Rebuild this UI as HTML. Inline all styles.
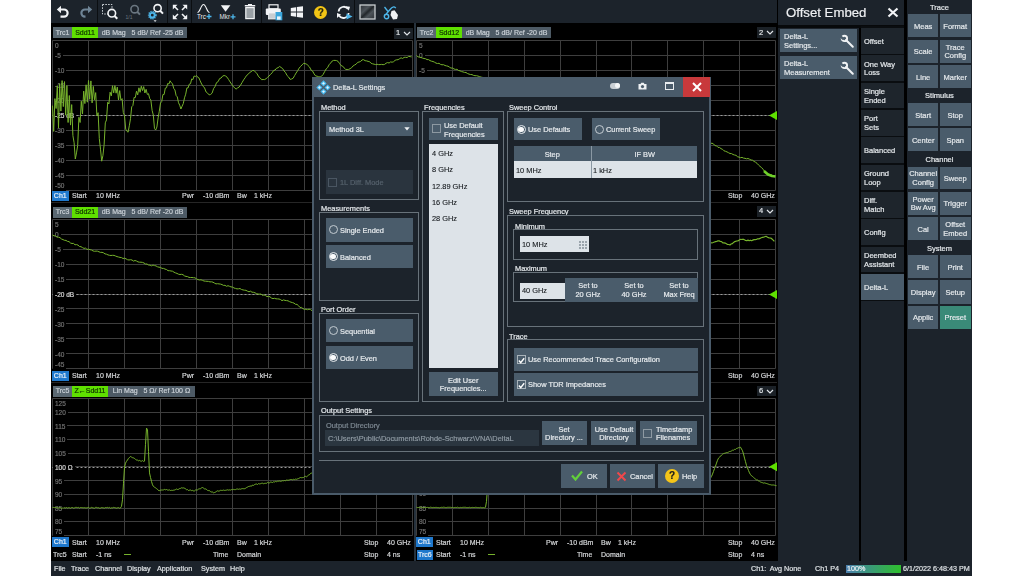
<!DOCTYPE html><html><head><meta charset="utf-8"><style>
html,body{margin:0;padding:0}
body{width:1024px;height:576px;background:#fff;position:relative;overflow:hidden;font-family:"Liberation Sans",sans-serif}
.a{position:absolute}
.t{white-space:nowrap;-webkit-text-stroke:0.2px currentColor;will-change:transform}
svg{position:absolute;left:0;top:0}
</style></head><body>
<div class="a" style="left:51px;top:0px;width:921px;height:576px;background:#000;"></div>
<div class="a" style="left:51px;top:0px;width:726px;height:23px;background:#1c232b;"></div>
<div class="a" style="left:97px;top:0px;width:1px;height:23px;background:#0b0e11;"></div>
<div class="a" style="left:167px;top:0px;width:1px;height:23px;background:#0b0e11;"></div>
<div class="a" style="left:191px;top:0px;width:1px;height:23px;background:#0b0e11;"></div>
<div class="a" style="left:261px;top:0px;width:1px;height:23px;background:#0b0e11;"></div>
<div class="a" style="left:354px;top:0px;width:1px;height:23px;background:#0b0e11;"></div>
<svg class="a" style="left:56px;top:5px" width="14" height="13" viewBox="0 0 14 13"><path d="M4,4.5 L8,4.5 A3.6,3.6 0 0 1 8,11.7 L4.5,11.7" fill="none" stroke="#f2f4f6" stroke-width="2.2"/><polygon points="0.8,4.5 5,0.8 5,8.2" fill="#f2f4f6"/></svg>
<svg class="a" style="left:79px;top:5px" width="14" height="13" viewBox="0 0 14 13"><path d="M10,4.5 L6,4.5 A3.6,3.6 0 0 0 6,11.7 L6.5,11.7" fill="none" stroke="#6f8597" stroke-width="2.2"/><polygon points="13.2,4.5 9,0.8 9,8.2" fill="#6f8597"/></svg>
<svg class="a" style="left:101px;top:3px" width="18" height="17" viewBox="0 0 18 17"><rect x="1.5" y="1.5" width="9.5" height="9.5" fill="none" stroke="#c8ced3" stroke-width="1" stroke-dasharray="1.6 1.2"/><circle cx="10.8" cy="10.2" r="3.8" fill="#1c232b" stroke="#f2f4f6" stroke-width="1.6"/><line x1="13.5" y1="13" x2="16.3" y2="15.8" stroke="#f2f4f6" stroke-width="2"/></svg>
<svg class="a" style="left:124px;top:3px" width="18" height="17" viewBox="0 0 18 17"><circle cx="10.6" cy="6.2" r="3.7" fill="none" stroke="#6a7680" stroke-width="1.6"/><line x1="13.2" y1="8.8" x2="16" y2="11.6" stroke="#6a7680" stroke-width="2"/><text x="1.5" y="15.5" font-size="5" fill="#6a7680" font-family="Liberation Sans">1/1</text></svg>
<svg class="a" style="left:147px;top:3px" width="19" height="20" viewBox="0 0 19 20"><circle cx="10.6" cy="5.2" r="3.6" fill="none" stroke="#f2f4f6" stroke-width="1.6"/><line x1="13.2" y1="7.8" x2="16" y2="10.6" stroke="#f2f4f6" stroke-width="2"/><circle cx="5.3" cy="12.2" r="3.6" fill="none" stroke="#4db6ea" stroke-width="1.6" stroke-dasharray="1.2 0.9"/><circle cx="5.3" cy="12.2" r="2.3" fill="none" stroke="#4db6ea" stroke-width="1.8"/><polygon points="6.6,17.2 9.6,17.2 8.1,19" fill="#e0e4e8"/></svg>
<svg class="a" style="left:172px;top:4px" width="16" height="16" viewBox="0 0 16 16"><g stroke="#f2f4f6" stroke-width="1.6" fill="none"><line x1="2" y1="2" x2="6" y2="6"/><line x1="14" y1="2" x2="10" y2="6"/><line x1="2" y1="14" x2="6" y2="10"/><line x1="14" y1="14" x2="10" y2="10"/></g><g fill="#f2f4f6"><polygon points="0.8,0.8 5.5,0.8 0.8,5.5"/><polygon points="15.2,0.8 10.5,0.8 15.2,5.5"/><polygon points="0.8,15.2 5.5,15.2 0.8,10.5"/><polygon points="15.2,15.2 10.5,15.2 15.2,10.5"/></g></svg>
<svg class="a" style="left:196px;top:3px" width="17" height="18" viewBox="0 0 17 18"><path d="M1.5,9.5 C4,9.5 5,1.5 7.5,1.5 C10,1.5 11,9.5 13.5,9.5" fill="none" stroke="#f2f4f6" stroke-width="1.1"/><text x="1" y="16" font-size="6.3" fill="#f2f4f6" font-family="Liberation Sans">Trc</text><path d="M10.5,13.5 L15.5,13.5 M13,11 L13,16" stroke="#4db6ea" stroke-width="1.3"/></svg>
<svg class="a" style="left:219px;top:3px" width="18" height="18" viewBox="0 0 18 18"><polygon points="1.8,2.2 11.4,2.2 6.6,8.8" fill="#f2f4f6"/><text x="0.5" y="16" font-size="6.3" fill="#e0e4e8" font-family="Liberation Sans">Mkr</text><path d="M11.5,13.8 L16.5,13.8 M14,11.3 L14,16.3" stroke="#4db6ea" stroke-width="1.3"/></svg>
<svg class="a" style="left:244px;top:4px" width="12" height="16" viewBox="0 0 12 16"><rect x="0.8" y="1" width="10.4" height="1.5" fill="#f2f4f6"/><rect x="4" y="0" width="4" height="1.2" fill="#f2f4f6"/><rect x="1.8" y="3.6" width="8.4" height="11" fill="#9aa1a6" stroke="#f2f4f6" stroke-width="1.2"/></svg>
<svg class="a" style="left:265px;top:4px" width="18" height="17" viewBox="0 0 18 17"><rect x="4" y="0.8" width="9" height="4" fill="none" stroke="#f2f4f6" stroke-width="1.2"/><rect x="0.8" y="4.6" width="15" height="6.5" rx="1" fill="#f2f4f6"/><rect x="3.5" y="9" width="7" height="6" fill="#c8ced2" stroke="#f2f4f6" stroke-width="0.8"/><rect x="10.5" y="8" width="6.8" height="8.3" fill="#3ba6db"/><rect x="12" y="12.4" width="3.6" height="3.3" fill="#e8f4fb"/></svg>
<svg class="a" style="left:290px;top:6px" width="14" height="12" viewBox="0 0 14 12"><polygon points="0.8,2 6,1.2 6,5.6 0.8,5.6" fill="#f2f4f6"/><polygon points="6.8,1.1 13,0.2 13,5.6 6.8,5.6" fill="#f2f4f6"/><polygon points="0.8,6.4 6,6.4 6,10.8 0.8,10" fill="#f2f4f6"/><polygon points="6.8,6.4 13,6.4 13,11.8 6.8,10.9" fill="#f2f4f6"/></svg>
<div class="a" style="left:313.5px;top:5.5px;width:13.5px;height:13.5px;border-radius:50%;background:#f3c515"></div>
<div class="a t" style="left:313.5px;top:5.5px;width:13.5px;height:13.5px;line-height:13.5px;text-align:center;font-size:10px;font-weight:bold;color:#2a2a10">?</div>
<svg class="a" style="left:336px;top:5px" width="17" height="15" viewBox="0 0 17 15"><path d="M2.6,6.5 A5.2,5.2 0 0 1 12,4" fill="none" stroke="#f2f4f6" stroke-width="1.8"/><polygon points="9.8,1.2 14,1.8 12.8,5.8" fill="#f2f4f6"/><path d="M12.6,8 A5.2,5.2 0 0 1 3,10.5" fill="none" stroke="#f2f4f6" stroke-width="1.8"/><polygon points="1,8 5,9.5 1,13" fill="#f2f4f6"/><polygon points="10.5,8.5 16.5,11.5 10.5,14.5" fill="#4db6ea"/></svg>
<svg class="a" style="left:359px;top:4px" width="17" height="16" viewBox="0 0 17 16"><defs><linearGradient id="sg" x1="0" y1="0" x2="1" y2="1"><stop offset="0" stop-color="#2c3136"/><stop offset="0.35" stop-color="#4d545a"/><stop offset="0.5" stop-color="#22272b"/><stop offset="0.65" stop-color="#4d545a"/><stop offset="1" stop-color="#2c3136"/></linearGradient></defs><rect x="1" y="1" width="15" height="14" fill="url(#sg)" stroke="#c9ced2" stroke-width="1.3"/></svg>
<svg class="a" style="left:383px;top:5px" width="16" height="15" viewBox="0 0 16 15"><path d="M3.2,9 L7.5,4 C9,2 11,1 12.8,3.2" fill="none" stroke="#4db6ea" stroke-width="1.3"/><circle cx="3.5" cy="11.5" r="2.2" fill="none" stroke="#4db6ea" stroke-width="1.4"/><path d="M1.5,2 L5,6.5" stroke="#4db6ea" stroke-width="1.3"/><path d="M8.5,6 L11.5,5.2 L15,10 L14,14 L10,14.5 L7.5,10 Z" fill="#f0f2f4"/></svg>
<div class="a" style="left:414px;top:23px;width:1.5px;height:538px;background:#26323d;"></div>
<svg width="1024" height="576" style="position:absolute;left:0;top:0"><line x1="52.5" y1="40.5" x2="52.5" y2="190.5" stroke="#3e3e3e" stroke-width="1" /><line x1="88.5" y1="40.5" x2="88.5" y2="190.5" stroke="#3e3e3e" stroke-width="1" /><line x1="124.5" y1="40.5" x2="124.5" y2="190.5" stroke="#3e3e3e" stroke-width="1" /><line x1="160.5" y1="40.5" x2="160.5" y2="190.5" stroke="#3e3e3e" stroke-width="1" /><line x1="196.5" y1="40.5" x2="196.5" y2="190.5" stroke="#3e3e3e" stroke-width="1" /><line x1="232.5" y1="40.5" x2="232.5" y2="190.5" stroke="#3e3e3e" stroke-width="1" /><line x1="268.5" y1="40.5" x2="268.5" y2="190.5" stroke="#3e3e3e" stroke-width="1" /><line x1="304.5" y1="40.5" x2="304.5" y2="190.5" stroke="#3e3e3e" stroke-width="1" /><line x1="340.5" y1="40.5" x2="340.5" y2="190.5" stroke="#3e3e3e" stroke-width="1" /><line x1="376.5" y1="40.5" x2="376.5" y2="190.5" stroke="#3e3e3e" stroke-width="1" /><line x1="412.5" y1="40.5" x2="412.5" y2="190.5" stroke="#3e3e3e" stroke-width="1" /><line x1="52.5" y1="40.5" x2="412.5" y2="40.5" stroke="#3e3e3e" stroke-width="1" /><line x1="52.5" y1="55.5" x2="412.5" y2="55.5" stroke="#3e3e3e" stroke-width="1" /><line x1="52.5" y1="70.5" x2="412.5" y2="70.5" stroke="#3e3e3e" stroke-width="1" /><line x1="52.5" y1="85.5" x2="412.5" y2="85.5" stroke="#3e3e3e" stroke-width="1" /><line x1="52.5" y1="100.5" x2="412.5" y2="100.5" stroke="#3e3e3e" stroke-width="1" /><line x1="52.5" y1="115.5" x2="412.5" y2="115.5" stroke="#3e3e3e" stroke-width="1" /><line x1="52.5" y1="130.5" x2="412.5" y2="130.5" stroke="#3e3e3e" stroke-width="1" /><line x1="52.5" y1="145.5" x2="412.5" y2="145.5" stroke="#3e3e3e" stroke-width="1" /><line x1="52.5" y1="160.5" x2="412.5" y2="160.5" stroke="#3e3e3e" stroke-width="1" /><line x1="52.5" y1="175.5" x2="412.5" y2="175.5" stroke="#3e3e3e" stroke-width="1" /><line x1="52.5" y1="190.5" x2="412.5" y2="190.5" stroke="#3e3e3e" stroke-width="1" /><line x1="52.5" y1="219.5" x2="52.5" y2="368.5" stroke="#3e3e3e" stroke-width="1" /><line x1="88.5" y1="219.5" x2="88.5" y2="368.5" stroke="#3e3e3e" stroke-width="1" /><line x1="124.5" y1="219.5" x2="124.5" y2="368.5" stroke="#3e3e3e" stroke-width="1" /><line x1="160.5" y1="219.5" x2="160.5" y2="368.5" stroke="#3e3e3e" stroke-width="1" /><line x1="196.5" y1="219.5" x2="196.5" y2="368.5" stroke="#3e3e3e" stroke-width="1" /><line x1="232.5" y1="219.5" x2="232.5" y2="368.5" stroke="#3e3e3e" stroke-width="1" /><line x1="268.5" y1="219.5" x2="268.5" y2="368.5" stroke="#3e3e3e" stroke-width="1" /><line x1="304.5" y1="219.5" x2="304.5" y2="368.5" stroke="#3e3e3e" stroke-width="1" /><line x1="340.5" y1="219.5" x2="340.5" y2="368.5" stroke="#3e3e3e" stroke-width="1" /><line x1="376.5" y1="219.5" x2="376.5" y2="368.5" stroke="#3e3e3e" stroke-width="1" /><line x1="412.5" y1="219.5" x2="412.5" y2="368.5" stroke="#3e3e3e" stroke-width="1" /><line x1="52.5" y1="219.5" x2="412.5" y2="219.5" stroke="#3e3e3e" stroke-width="1" /><line x1="52.5" y1="234.5" x2="412.5" y2="234.5" stroke="#3e3e3e" stroke-width="1" /><line x1="52.5" y1="249.5" x2="412.5" y2="249.5" stroke="#3e3e3e" stroke-width="1" /><line x1="52.5" y1="264.5" x2="412.5" y2="264.5" stroke="#3e3e3e" stroke-width="1" /><line x1="52.5" y1="279.5" x2="412.5" y2="279.5" stroke="#3e3e3e" stroke-width="1" /><line x1="52.5" y1="294.5" x2="412.5" y2="294.5" stroke="#3e3e3e" stroke-width="1" /><line x1="52.5" y1="308.5" x2="412.5" y2="308.5" stroke="#3e3e3e" stroke-width="1" /><line x1="52.5" y1="323.5" x2="412.5" y2="323.5" stroke="#3e3e3e" stroke-width="1" /><line x1="52.5" y1="338.5" x2="412.5" y2="338.5" stroke="#3e3e3e" stroke-width="1" /><line x1="52.5" y1="353.5" x2="412.5" y2="353.5" stroke="#3e3e3e" stroke-width="1" /><line x1="52.5" y1="368.5" x2="412.5" y2="368.5" stroke="#3e3e3e" stroke-width="1" /><line x1="52.5" y1="398.5" x2="52.5" y2="535.5" stroke="#3e3e3e" stroke-width="1" /><line x1="88.5" y1="398.5" x2="88.5" y2="535.5" stroke="#3e3e3e" stroke-width="1" /><line x1="124.5" y1="398.5" x2="124.5" y2="535.5" stroke="#3e3e3e" stroke-width="1" /><line x1="160.5" y1="398.5" x2="160.5" y2="535.5" stroke="#3e3e3e" stroke-width="1" /><line x1="196.5" y1="398.5" x2="196.5" y2="535.5" stroke="#3e3e3e" stroke-width="1" /><line x1="232.5" y1="398.5" x2="232.5" y2="535.5" stroke="#3e3e3e" stroke-width="1" /><line x1="268.5" y1="398.5" x2="268.5" y2="535.5" stroke="#3e3e3e" stroke-width="1" /><line x1="304.5" y1="398.5" x2="304.5" y2="535.5" stroke="#3e3e3e" stroke-width="1" /><line x1="340.5" y1="398.5" x2="340.5" y2="535.5" stroke="#3e3e3e" stroke-width="1" /><line x1="376.5" y1="398.5" x2="376.5" y2="535.5" stroke="#3e3e3e" stroke-width="1" /><line x1="412.5" y1="398.5" x2="412.5" y2="535.5" stroke="#3e3e3e" stroke-width="1" /><line x1="52.5" y1="398.5" x2="412.5" y2="398.5" stroke="#3e3e3e" stroke-width="1" /><line x1="52.5" y1="412.5" x2="412.5" y2="412.5" stroke="#3e3e3e" stroke-width="1" /><line x1="52.5" y1="425.5" x2="412.5" y2="425.5" stroke="#3e3e3e" stroke-width="1" /><line x1="52.5" y1="439.5" x2="412.5" y2="439.5" stroke="#3e3e3e" stroke-width="1" /><line x1="52.5" y1="453.5" x2="412.5" y2="453.5" stroke="#3e3e3e" stroke-width="1" /><line x1="52.5" y1="466.5" x2="412.5" y2="466.5" stroke="#3e3e3e" stroke-width="1" /><line x1="52.5" y1="480.5" x2="412.5" y2="480.5" stroke="#3e3e3e" stroke-width="1" /><line x1="52.5" y1="494.5" x2="412.5" y2="494.5" stroke="#3e3e3e" stroke-width="1" /><line x1="52.5" y1="508.5" x2="412.5" y2="508.5" stroke="#3e3e3e" stroke-width="1" /><line x1="52.5" y1="521.5" x2="412.5" y2="521.5" stroke="#3e3e3e" stroke-width="1" /><line x1="52.5" y1="535.5" x2="412.5" y2="535.5" stroke="#3e3e3e" stroke-width="1" /><line x1="416.5" y1="40.5" x2="416.5" y2="190.5" stroke="#3e3e3e" stroke-width="1" /><line x1="452.5" y1="40.5" x2="452.5" y2="190.5" stroke="#3e3e3e" stroke-width="1" /><line x1="488.5" y1="40.5" x2="488.5" y2="190.5" stroke="#3e3e3e" stroke-width="1" /><line x1="524.5" y1="40.5" x2="524.5" y2="190.5" stroke="#3e3e3e" stroke-width="1" /><line x1="560.5" y1="40.5" x2="560.5" y2="190.5" stroke="#3e3e3e" stroke-width="1" /><line x1="596.5" y1="40.5" x2="596.5" y2="190.5" stroke="#3e3e3e" stroke-width="1" /><line x1="631.5" y1="40.5" x2="631.5" y2="190.5" stroke="#3e3e3e" stroke-width="1" /><line x1="667.5" y1="40.5" x2="667.5" y2="190.5" stroke="#3e3e3e" stroke-width="1" /><line x1="703.5" y1="40.5" x2="703.5" y2="190.5" stroke="#3e3e3e" stroke-width="1" /><line x1="739.5" y1="40.5" x2="739.5" y2="190.5" stroke="#3e3e3e" stroke-width="1" /><line x1="775.5" y1="40.5" x2="775.5" y2="190.5" stroke="#3e3e3e" stroke-width="1" /><line x1="416.5" y1="40.5" x2="775.5" y2="40.5" stroke="#3e3e3e" stroke-width="1" /><line x1="416.5" y1="55.5" x2="775.5" y2="55.5" stroke="#3e3e3e" stroke-width="1" /><line x1="416.5" y1="70.5" x2="775.5" y2="70.5" stroke="#3e3e3e" stroke-width="1" /><line x1="416.5" y1="85.5" x2="775.5" y2="85.5" stroke="#3e3e3e" stroke-width="1" /><line x1="416.5" y1="100.5" x2="775.5" y2="100.5" stroke="#3e3e3e" stroke-width="1" /><line x1="416.5" y1="115.5" x2="775.5" y2="115.5" stroke="#3e3e3e" stroke-width="1" /><line x1="416.5" y1="130.5" x2="775.5" y2="130.5" stroke="#3e3e3e" stroke-width="1" /><line x1="416.5" y1="145.5" x2="775.5" y2="145.5" stroke="#3e3e3e" stroke-width="1" /><line x1="416.5" y1="160.5" x2="775.5" y2="160.5" stroke="#3e3e3e" stroke-width="1" /><line x1="416.5" y1="175.5" x2="775.5" y2="175.5" stroke="#3e3e3e" stroke-width="1" /><line x1="416.5" y1="190.5" x2="775.5" y2="190.5" stroke="#3e3e3e" stroke-width="1" /><line x1="416.5" y1="219.5" x2="416.5" y2="368.5" stroke="#3e3e3e" stroke-width="1" /><line x1="452.5" y1="219.5" x2="452.5" y2="368.5" stroke="#3e3e3e" stroke-width="1" /><line x1="488.5" y1="219.5" x2="488.5" y2="368.5" stroke="#3e3e3e" stroke-width="1" /><line x1="524.5" y1="219.5" x2="524.5" y2="368.5" stroke="#3e3e3e" stroke-width="1" /><line x1="560.5" y1="219.5" x2="560.5" y2="368.5" stroke="#3e3e3e" stroke-width="1" /><line x1="596.5" y1="219.5" x2="596.5" y2="368.5" stroke="#3e3e3e" stroke-width="1" /><line x1="631.5" y1="219.5" x2="631.5" y2="368.5" stroke="#3e3e3e" stroke-width="1" /><line x1="667.5" y1="219.5" x2="667.5" y2="368.5" stroke="#3e3e3e" stroke-width="1" /><line x1="703.5" y1="219.5" x2="703.5" y2="368.5" stroke="#3e3e3e" stroke-width="1" /><line x1="739.5" y1="219.5" x2="739.5" y2="368.5" stroke="#3e3e3e" stroke-width="1" /><line x1="775.5" y1="219.5" x2="775.5" y2="368.5" stroke="#3e3e3e" stroke-width="1" /><line x1="416.5" y1="219.5" x2="775.5" y2="219.5" stroke="#3e3e3e" stroke-width="1" /><line x1="416.5" y1="234.5" x2="775.5" y2="234.5" stroke="#3e3e3e" stroke-width="1" /><line x1="416.5" y1="249.5" x2="775.5" y2="249.5" stroke="#3e3e3e" stroke-width="1" /><line x1="416.5" y1="264.5" x2="775.5" y2="264.5" stroke="#3e3e3e" stroke-width="1" /><line x1="416.5" y1="279.5" x2="775.5" y2="279.5" stroke="#3e3e3e" stroke-width="1" /><line x1="416.5" y1="294.5" x2="775.5" y2="294.5" stroke="#3e3e3e" stroke-width="1" /><line x1="416.5" y1="308.5" x2="775.5" y2="308.5" stroke="#3e3e3e" stroke-width="1" /><line x1="416.5" y1="323.5" x2="775.5" y2="323.5" stroke="#3e3e3e" stroke-width="1" /><line x1="416.5" y1="338.5" x2="775.5" y2="338.5" stroke="#3e3e3e" stroke-width="1" /><line x1="416.5" y1="353.5" x2="775.5" y2="353.5" stroke="#3e3e3e" stroke-width="1" /><line x1="416.5" y1="368.5" x2="775.5" y2="368.5" stroke="#3e3e3e" stroke-width="1" /><line x1="416.5" y1="398.5" x2="416.5" y2="535.5" stroke="#3e3e3e" stroke-width="1" /><line x1="452.5" y1="398.5" x2="452.5" y2="535.5" stroke="#3e3e3e" stroke-width="1" /><line x1="488.5" y1="398.5" x2="488.5" y2="535.5" stroke="#3e3e3e" stroke-width="1" /><line x1="524.5" y1="398.5" x2="524.5" y2="535.5" stroke="#3e3e3e" stroke-width="1" /><line x1="560.5" y1="398.5" x2="560.5" y2="535.5" stroke="#3e3e3e" stroke-width="1" /><line x1="596.5" y1="398.5" x2="596.5" y2="535.5" stroke="#3e3e3e" stroke-width="1" /><line x1="631.5" y1="398.5" x2="631.5" y2="535.5" stroke="#3e3e3e" stroke-width="1" /><line x1="667.5" y1="398.5" x2="667.5" y2="535.5" stroke="#3e3e3e" stroke-width="1" /><line x1="703.5" y1="398.5" x2="703.5" y2="535.5" stroke="#3e3e3e" stroke-width="1" /><line x1="739.5" y1="398.5" x2="739.5" y2="535.5" stroke="#3e3e3e" stroke-width="1" /><line x1="775.5" y1="398.5" x2="775.5" y2="535.5" stroke="#3e3e3e" stroke-width="1" /><line x1="416.5" y1="398.5" x2="775.5" y2="398.5" stroke="#3e3e3e" stroke-width="1" /><line x1="416.5" y1="412.5" x2="775.5" y2="412.5" stroke="#3e3e3e" stroke-width="1" /><line x1="416.5" y1="425.5" x2="775.5" y2="425.5" stroke="#3e3e3e" stroke-width="1" /><line x1="416.5" y1="439.5" x2="775.5" y2="439.5" stroke="#3e3e3e" stroke-width="1" /><line x1="416.5" y1="453.5" x2="775.5" y2="453.5" stroke="#3e3e3e" stroke-width="1" /><line x1="416.5" y1="466.5" x2="775.5" y2="466.5" stroke="#3e3e3e" stroke-width="1" /><line x1="416.5" y1="480.5" x2="775.5" y2="480.5" stroke="#3e3e3e" stroke-width="1" /><line x1="416.5" y1="494.5" x2="775.5" y2="494.5" stroke="#3e3e3e" stroke-width="1" /><line x1="416.5" y1="508.5" x2="775.5" y2="508.5" stroke="#3e3e3e" stroke-width="1" /><line x1="416.5" y1="521.5" x2="775.5" y2="521.5" stroke="#3e3e3e" stroke-width="1" /><line x1="416.5" y1="535.5" x2="775.5" y2="535.5" stroke="#3e3e3e" stroke-width="1" /><line x1="51" y1="202.5" x2="777" y2="202.5" stroke="#262626" stroke-width="1" /><line x1="51" y1="382.5" x2="777" y2="382.5" stroke="#262626" stroke-width="1" /><line x1="52.5" y1="115.5" x2="412.5" y2="115.5" stroke="#9a9a9a" stroke-width="1" stroke-dasharray="2 2"/><line x1="416.5" y1="115.5" x2="775.5" y2="115.5" stroke="#9a9a9a" stroke-width="1" stroke-dasharray="2 2"/><line x1="52.5" y1="294.5" x2="412.5" y2="294.5" stroke="#9a9a9a" stroke-width="1" stroke-dasharray="2 2"/><line x1="416.5" y1="294.5" x2="775.5" y2="294.5" stroke="#9a9a9a" stroke-width="1" stroke-dasharray="2 2"/><line x1="52.5" y1="467.5" x2="412.5" y2="467.5" stroke="#9a9a9a" stroke-width="1" stroke-dasharray="2 2"/><line x1="416.5" y1="467.5" x2="775.5" y2="467.5" stroke="#9a9a9a" stroke-width="1" stroke-dasharray="2 2"/></svg>
<div class="a t" style="left:53px;top:41.2px;height:10px;line-height:10px;font-size:6.5px;color:#707070;background:#000;padding-right:2px;padding-left:2px">0</div>
<div class="a t" style="left:53px;top:51.2px;height:10px;line-height:10px;font-size:6.5px;color:#707070;background:#000;padding-right:2px;padding-left:2px">-5</div>
<div class="a t" style="left:53px;top:66.2px;height:10px;line-height:10px;font-size:6.5px;color:#707070;background:#000;padding-right:2px;padding-left:2px">-10</div>
<div class="a t" style="left:53px;top:81.2px;height:10px;line-height:10px;font-size:6.5px;color:#707070;background:#000;padding-right:2px;padding-left:2px">-15</div>
<div class="a t" style="left:53px;top:96.2px;height:10px;line-height:10px;font-size:6.5px;color:#707070;background:#000;padding-right:2px;padding-left:2px">-20</div>
<div class="a t" style="left:53px;top:111.2px;height:10px;line-height:10px;font-size:6.5px;color:#d8d8d8;background:#000;padding-right:2px;padding-left:2px">-25 dB</div>
<div class="a t" style="left:53px;top:126.2px;height:10px;line-height:10px;font-size:6.5px;color:#707070;background:#000;padding-right:2px;padding-left:2px">-30</div>
<div class="a t" style="left:53px;top:141.2px;height:10px;line-height:10px;font-size:6.5px;color:#707070;background:#000;padding-right:2px;padding-left:2px">-35</div>
<div class="a t" style="left:53px;top:156.2px;height:10px;line-height:10px;font-size:6.5px;color:#707070;background:#000;padding-right:2px;padding-left:2px">-40</div>
<div class="a t" style="left:53px;top:171.2px;height:10px;line-height:10px;font-size:6.5px;color:#707070;background:#000;padding-right:2px;padding-left:2px">-45</div>
<div class="a t" style="left:53px;top:181.2px;height:10px;line-height:10px;font-size:6.5px;color:#707070;background:#000;padding-right:2px;padding-left:2px">-50</div>
<div class="a t" style="left:417px;top:41.2px;height:10px;line-height:10px;font-size:6.5px;color:#707070;background:#000;padding-right:2px;padding-left:2px">5</div>
<div class="a t" style="left:417px;top:51.2px;height:10px;line-height:10px;font-size:6.5px;color:#707070;background:#000;padding-right:2px;padding-left:2px">0</div>
<div class="a t" style="left:417px;top:66.2px;height:10px;line-height:10px;font-size:6.5px;color:#707070;background:#000;padding-right:2px;padding-left:2px">-5</div>
<div class="a t" style="left:53px;top:219.7px;height:10px;line-height:10px;font-size:6.5px;color:#707070;background:#000;padding-right:2px;padding-left:2px">5</div>
<div class="a t" style="left:53px;top:230.2px;height:10px;line-height:10px;font-size:6.5px;color:#707070;background:#000;padding-right:2px;padding-left:2px">0</div>
<div class="a t" style="left:53px;top:245.2px;height:10px;line-height:10px;font-size:6.5px;color:#707070;background:#000;padding-right:2px;padding-left:2px">-5</div>
<div class="a t" style="left:53px;top:260.2px;height:10px;line-height:10px;font-size:6.5px;color:#707070;background:#000;padding-right:2px;padding-left:2px">-10</div>
<div class="a t" style="left:53px;top:275.2px;height:10px;line-height:10px;font-size:6.5px;color:#707070;background:#000;padding-right:2px;padding-left:2px">-15</div>
<div class="a t" style="left:53px;top:290.2px;height:10px;line-height:10px;font-size:6.5px;color:#d8d8d8;background:#000;padding-right:2px;padding-left:2px">-20 dB</div>
<div class="a t" style="left:53px;top:305.2px;height:10px;line-height:10px;font-size:6.5px;color:#707070;background:#000;padding-right:2px;padding-left:2px">-25</div>
<div class="a t" style="left:53px;top:320.2px;height:10px;line-height:10px;font-size:6.5px;color:#707070;background:#000;padding-right:2px;padding-left:2px">-30</div>
<div class="a t" style="left:53px;top:335.2px;height:10px;line-height:10px;font-size:6.5px;color:#707070;background:#000;padding-right:2px;padding-left:2px">-35</div>
<div class="a t" style="left:53px;top:349.7px;height:10px;line-height:10px;font-size:6.5px;color:#707070;background:#000;padding-right:2px;padding-left:2px">-40</div>
<div class="a t" style="left:53px;top:359.7px;height:10px;line-height:10px;font-size:6.5px;color:#707070;background:#000;padding-right:2px;padding-left:2px">-45</div>
<div class="a t" style="left:53px;top:399.2px;height:10px;line-height:10px;font-size:6.5px;color:#707070;background:#000;padding-right:2px;padding-left:2px">125</div>
<div class="a t" style="left:53px;top:407.7px;height:10px;line-height:10px;font-size:6.5px;color:#707070;background:#000;padding-right:2px;padding-left:2px">120</div>
<div class="a t" style="left:53px;top:421.7px;height:10px;line-height:10px;font-size:6.5px;color:#707070;background:#000;padding-right:2px;padding-left:2px">115</div>
<div class="a t" style="left:53px;top:435.2px;height:10px;line-height:10px;font-size:6.5px;color:#707070;background:#000;padding-right:2px;padding-left:2px">110</div>
<div class="a t" style="left:53px;top:448.7px;height:10px;line-height:10px;font-size:6.5px;color:#707070;background:#000;padding-right:2px;padding-left:2px">105</div>
<div class="a t" style="left:53px;top:463.2px;height:10px;line-height:10px;font-size:6.5px;color:#d8d8d8;background:#000;padding-right:2px;padding-left:2px">100 &Omega;</div>
<div class="a t" style="left:53px;top:476.7px;height:10px;line-height:10px;font-size:6.5px;color:#707070;background:#000;padding-right:2px;padding-left:2px">95</div>
<div class="a t" style="left:53px;top:490.2px;height:10px;line-height:10px;font-size:6.5px;color:#707070;background:#000;padding-right:2px;padding-left:2px">90</div>
<div class="a t" style="left:53px;top:503.7px;height:10px;line-height:10px;font-size:6.5px;color:#707070;background:#000;padding-right:2px;padding-left:2px">85</div>
<div class="a t" style="left:53px;top:517.2px;height:10px;line-height:10px;font-size:6.5px;color:#707070;background:#000;padding-right:2px;padding-left:2px">80</div>
<div class="a t" style="left:53px;top:526.7px;height:10px;line-height:10px;font-size:6.5px;color:#707070;background:#000;padding-right:2px;padding-left:2px">75</div>
<div class="a t" style="left:417px;top:489.2px;height:10px;line-height:10px;font-size:6.5px;color:#707070;background:#000;padding-right:2px;padding-left:2px">90</div>
<div class="a t" style="left:417px;top:503.7px;height:10px;line-height:10px;font-size:6.5px;color:#707070;background:#000;padding-right:2px;padding-left:2px">85</div>
<div class="a t" style="left:417px;top:517.2px;height:10px;line-height:10px;font-size:6.5px;color:#707070;background:#000;padding-right:2px;padding-left:2px">80</div>
<div class="a t" style="left:417px;top:526.7px;height:10px;line-height:10px;font-size:6.5px;color:#707070;background:#000;padding-right:2px;padding-left:2px">75</div>
<svg width="1024" height="576" style="position:absolute;left:0;top:0"><polyline points="52.5,105.6 53.7,131.4 54.9,98.6 56.1,108.5 57.3,85.7 58.5,128.0 59.7,83.7 60.9,111.1 62.1,80.6 63.3,106.6 64.5,81.6 65.7,115.2 66.9,85.6 68.1,122.5 69.3,95.5 70.5,125.1 71.7,104.6 72.9,135.6 74.1,142.7 75.3,159.0 76.5,152.9 77.7,145.3 78.9,117.3 80.1,122.5 81.3,101.2 82.5,114.0 83.7,91.1 84.9,103.6 86.1,84.8 87.3,102.2 88.5,80.5 89.7,99.3 90.9,80.9 92.1,102.9 93.3,86.4 94.5,99.8 95.7,92.6 96.9,115.8 98.1,112.7 99.3,138.6 100.5,149.2 101.7,161.2 102.9,155.7 104.1,144.9 105.3,122.8 106.5,119.9 107.7,102.3 108.9,104.0 110.1,92.2 111.3,95.9 112.5,85.7 113.7,92.9 114.9,85.6 116.1,93.2 117.3,87.1 118.5,100.0 119.7,90.6 120.9,100.1 122.1,98.6 123.3,112.6 124.5,115.6 125.7,129.1 126.9,131.2 128.1,132.2 129.3,125.8 130.5,118.7 131.7,106.8 132.9,105.5 134.1,97.4 135.3,97.6 136.5,91.2 137.7,94.9 138.9,87.8 140.1,92.3 141.3,86.2 142.5,90.6 143.7,86.6 144.9,93.0 146.1,89.3 147.3,94.4 148.5,93.7 149.7,98.5 150.9,100.3 152.1,110.4 153.3,115.0 154.5,128.6 155.7,130.0 156.9,127.0 158.1,117.9 159.3,111.2 160.5,103.0 161.7,101.6 162.9,94.6 164.1,94.5 165.3,88.1 166.5,87.8 167.7,83.5 168.9,84.0 170.1,80.8 171.3,82.8 172.5,83.7 173.7,88.4 174.9,89.9 176.1,95.5 177.3,96.9 178.5,102.7 179.7,105.2 180.9,109.0 182.1,106.2 183.3,103.5 184.5,97.8 185.7,94.2 186.9,87.9 188.1,87.9 189.3,84.1 190.5,83.8 191.7,78.9 192.9,79.6 194.1,76.0 195.3,76.5 196.5,75.5 197.7,77.3 198.9,77.8 200.1,80.7 201.6,84.0 203.1,86.2 204.6,88.0 206.1,92.0 207.6,93.1 209.1,94.9 210.6,94.5 212.1,93.1 213.6,88.6 215.1,86.4 216.6,82.5 218.1,81.7 219.6,78.6 221.1,78.0 222.6,76.1 224.1,75.5 225.6,76.0 227.1,77.2 228.6,79.5 230.1,81.9 231.6,84.2 233.1,86.2 234.6,87.9 236.1,89.1 237.6,87.9 239.1,87.1 240.6,85.0 242.1,82.5 243.6,79.9 245.1,77.8 246.6,75.4 248.1,74.4 249.6,72.5 251.1,71.7 252.6,70.5 254.1,70.6 255.6,72.2 257.1,73.8 258.6,76.7 260.1,77.8 261.6,79.7 263.1,79.5 264.6,79.6 266.1,78.7 267.6,77.3 269.1,76.0 270.6,74.3 272.1,72.8 273.6,70.5 275.1,70.0 276.6,68.2 278.1,67.7 279.6,66.4 281.1,67.5 282.6,68.5 284.1,71.0 285.6,72.7 287.1,75.6 288.6,77.0 290.1,79.4 291.6,79.0 293.1,78.3 294.6,75.6 296.1,73.0 297.6,70.8 299.1,68.2 300.6,66.4 302.1,64.9 303.6,63.3 305.1,63.7 306.6,64.0 308.1,65.7 309.6,67.1 311.1,70.1 312.6,71.1 314.1,73.9 315.6,75.9 317.1,76.2 318.6,76.7 320.1,77.0 321.6,76.2 323.1,74.5 324.6,71.7 326.1,69.0 327.6,67.6 329.1,64.7 330.6,63.1 332.1,61.1 333.6,60.4 335.1,60.4 336.6,60.6 338.1,61.4 339.6,63.6 341.1,65.6 342.6,66.1 344.1,67.9 345.6,69.3 347.1,69.5 348.6,69.4 350.1,68.7 351.6,67.7 353.1,65.9 354.6,65.0 356.1,64.2 357.6,62.4 359.1,62.0 360.6,61.5 362.1,59.9 363.6,59.7 365.1,60.7 366.6,60.9 368.1,61.4 369.6,61.7 371.1,63.3 372.6,63.8 374.1,64.2 375.6,64.6 377.1,64.3 378.6,64.6 380.1,64.6 381.6,64.4 383.1,64.7 384.6,64.4 386.1,63.2 387.6,62.6 389.1,63.0 390.6,61.9 392.1,62.2 393.6,61.7 395.1,60.3 396.6,59.8 398.1,59.7 399.6,58.7 401.1,57.8 402.6,58.5 404.1,57.4 405.6,57.3 407.1,57.5 408.6,56.4 410.1,56.6 411.6,56.9" fill="none" stroke="#76b22c" stroke-width="1" stroke-linejoin="round"/><polyline points="416.5,55.5 418.0,56.8 419.5,57.2 421.0,57.5 422.5,58.1 424.0,58.5 425.5,58.7 427.0,59.6 428.5,59.6 430.0,60.6 431.5,61.2 433.0,61.5 434.5,62.2 436.0,63.1 437.5,63.5 439.0,63.3 440.5,64.4 442.0,64.8 443.5,64.7 445.0,65.5 446.5,65.9 448.0,66.2 449.5,67.2 451.0,68.1 452.5,68.0 454.0,69.0 455.5,69.4 457.0,69.3 458.5,70.5 460.0,70.8 461.5,71.6 463.0,71.9 464.5,72.4 466.0,72.5 467.5,73.5 469.0,74.1 470.5,74.5 472.0,74.6 473.5,75.4 475.0,75.7 476.5,75.7 478.0,76.1 479.5,76.5 481.0,77.1 482.5,77.4 484.0,78.2 485.5,78.8 487.0,79.0 488.5,79.3 490.0,80.0 491.5,80.0 493.0,80.6 494.5,81.3 496.0,81.4 497.5,81.5 499.0,82.7 500.5,82.9 502.0,83.0 503.5,83.4 505.0,83.9 506.5,84.4 508.0,84.5 509.5,84.6 511.0,85.3 512.5,86.2 514.0,86.0 515.5,86.7 517.0,86.9 518.5,87.3 520.0,87.7 521.5,88.3 523.0,88.5 524.5,88.8 526.0,89.3 527.5,89.8 529.0,90.6 530.5,90.6 532.0,91.0 533.5,91.9 535.0,92.3 536.5,93.0 538.0,92.8 539.5,93.6 541.0,94.0 542.5,94.0 544.0,95.4 545.5,95.1 547.0,95.4 548.5,96.2 550.0,96.4 551.5,97.2 553.0,97.4 554.5,97.6 556.0,98.0 557.5,99.1 559.0,99.1 560.5,100.0 562.0,100.1 563.5,101.0 565.0,100.8 566.5,101.2 568.0,101.7 569.5,102.7 571.0,102.9 572.5,103.1 574.0,103.2 575.5,104.3 577.0,105.0 578.5,105.0 580.0,104.9 581.5,105.3 583.0,105.8 584.5,106.4 586.0,106.7 587.5,107.1 589.0,108.1 590.5,108.8 592.0,108.6 593.5,109.8 595.0,109.7 596.5,110.5 598.0,111.0 599.5,111.5 601.0,111.0 602.5,111.7 604.0,112.4 605.5,113.2 607.0,112.8 608.5,113.4 610.0,114.4 611.5,114.1 613.0,114.8 614.5,115.2 616.0,116.0 617.5,116.7 619.0,116.4 620.5,117.4 622.0,117.8 623.5,118.3 625.0,118.5 626.5,119.3 628.0,119.2 629.5,119.6 631.0,119.9 632.5,120.9 634.0,121.0 635.5,121.2 637.0,121.6 638.5,122.6 640.0,122.9 641.5,123.4 643.0,123.5 644.5,124.1 646.0,124.2 647.5,125.1 649.0,124.9 650.5,125.8 652.0,126.5 653.5,126.9 655.0,126.7 656.5,127.3 658.0,128.3 659.5,128.6 661.0,129.2 662.5,129.7 664.0,129.7 665.5,130.6 667.0,130.8 668.5,130.9 670.0,131.3 671.5,131.5 673.0,132.2 674.5,133.2 676.0,132.8 677.5,133.7 679.0,133.7 680.5,134.1 682.0,135.1 683.5,135.1 685.0,135.4 686.5,135.9 688.0,136.8 689.5,137.2 691.0,137.1 692.5,137.7 694.0,138.9 695.5,138.6 697.0,139.3 698.5,139.6 700.0,140.4 701.5,140.7 703.0,141.3 704.5,141.5 706.0,141.6 707.5,142.0 709.0,142.3 710.5,143.5 712.0,143.2 713.5,143.9 715.0,145.7 716.5,145.8 718.0,147.4 719.5,147.4 721.0,148.7 722.5,149.3 724.0,150.8 725.5,151.3 727.0,151.9 728.5,152.7 730.0,153.5 731.5,153.6 733.0,154.5 734.5,155.0 736.0,155.3 737.5,156.7 739.0,157.1 740.5,157.7 742.0,157.4 743.5,158.1 745.0,158.3 746.5,158.8 748.0,158.5 749.5,159.2 751.0,160.0 752.5,160.2 754.0,161.4 755.5,162.2 757.0,163.3 758.5,165.0 760.0,166.4 761.5,167.5 763.0,169.2 764.5,171.3 766.0,172.1 767.5,173.7 769.0,174.2 770.5,174.7 772.0,175.0 773.5,176.2 775.0,176.4" fill="none" stroke="#76b22c" stroke-width="1" stroke-linejoin="round"/><polyline points="764.0,171.0 768.0,174.5 772.0,176.0 775.5,176.5" fill="none" stroke="#6fd02a" stroke-width="2.6" stroke-linejoin="round"/><polyline points="52.5,235.0 54.0,235.8 55.5,236.0 57.0,237.1 58.5,237.2 60.0,237.7 61.5,239.0 63.0,239.6 64.5,240.3 66.0,240.4 67.5,241.4 69.0,241.6 70.5,243.0 72.0,243.5 73.5,243.4 75.0,244.8 76.5,244.6 78.0,245.1 79.5,246.5 81.0,246.7 82.5,247.6 84.0,248.4 85.5,248.1 87.0,249.4 88.5,249.2 90.0,249.7 91.5,250.0 93.0,250.9 94.5,251.3 96.0,251.1 97.5,251.2 99.0,251.8 100.5,252.4 102.0,252.3 103.5,252.8 105.0,253.9 106.5,254.2 108.0,254.9 109.5,255.3 111.0,255.5 112.5,255.3 114.0,255.4 115.5,256.0 117.0,256.6 118.5,257.0 120.0,257.4 121.5,257.6 123.0,258.5 124.5,258.2 126.0,258.8 127.5,259.7 129.0,260.0 130.5,259.7 132.0,260.0 133.5,261.1 135.0,260.5 136.5,261.0 138.0,261.9 139.5,262.2 141.0,262.2 142.5,262.4 144.0,263.0 145.5,264.0 147.0,264.0 148.5,265.0 150.0,265.1 151.5,265.8 153.0,265.0 154.5,265.6 156.0,265.9 157.5,266.8 159.0,267.2 160.5,267.4 162.0,268.4 163.5,268.4 165.0,269.1 166.5,269.5 168.0,270.7 169.5,270.7 171.0,271.0 172.5,271.2 174.0,272.2 175.5,272.9 177.0,273.4 178.5,274.2 180.0,274.5 181.5,274.3 183.0,274.7 184.5,275.9 186.0,276.4 187.5,276.6 189.0,277.4 190.5,277.5 192.0,277.5 193.5,277.7 195.0,277.8 196.5,278.9 198.0,279.6 199.5,280.0 201.0,279.8 202.5,280.4 204.0,281.0 205.5,281.2 207.0,281.3 208.5,281.4 210.0,281.9 211.5,281.8 213.0,282.2 214.5,283.1 216.0,283.9 217.5,283.7 219.0,283.9 220.5,284.1 222.0,284.6 223.5,285.4 225.0,285.3 226.5,286.3 228.0,285.7 229.5,286.3 231.0,286.9 232.5,287.1 234.0,288.0 235.5,288.4 237.0,288.9 238.5,288.8 240.0,288.5 241.5,289.5 243.0,289.9 244.5,290.2 246.0,290.3 247.5,291.2 249.0,291.8 250.5,291.2 252.0,292.2 253.5,292.3 255.0,292.8 256.5,293.6 258.0,294.1 259.5,294.1 261.0,294.0 262.5,295.4 264.0,294.9 265.5,295.6 267.0,296.6 268.5,296.4 270.0,296.8 271.5,298.1 273.0,298.6 274.5,298.3 276.0,298.8 277.5,298.9 279.0,299.0 280.5,299.5 282.0,300.7 283.5,299.9 285.0,300.4 286.5,300.6 288.0,300.8 289.5,301.6 291.0,302.2 292.5,302.6 294.0,303.1 295.5,304.3 297.0,304.4 298.5,305.7 300.0,307.5 301.5,307.4 303.0,308.7 304.5,309.3 306.0,309.2 307.5,309.7 309.0,309.2 310.5,309.6 312.0,310.7 313.5,309.8 315.0,311.0 316.5,310.5 318.0,311.7 319.5,311.7 321.0,311.9 322.5,311.6 324.0,311.8 325.5,313.0 327.0,312.6 328.5,312.9 330.0,313.9 331.5,314.3 333.0,313.6 334.5,315.0 336.0,314.8 337.5,314.9 339.0,314.9 340.5,315.5 342.0,316.5 343.5,316.0 345.0,316.1 346.5,316.4 348.0,316.7 349.5,317.3 351.0,318.3 352.5,317.6 354.0,318.0 355.5,319.2 357.0,319.6 358.5,319.8 360.0,319.3 361.5,319.7 363.0,320.7 364.5,320.5 366.0,321.0 367.5,320.8 369.0,320.8 370.5,321.5 372.0,322.3 373.5,322.6 375.0,322.7 376.5,322.8 378.0,323.2 379.5,323.4 381.0,323.8 382.5,324.5 384.0,324.0 385.5,324.8 387.0,325.5 388.5,325.7 390.0,325.2 391.5,326.4 393.0,326.6 394.5,326.1 396.0,326.5 397.5,326.7 399.0,326.9 400.5,328.3 402.0,327.9 403.5,328.7 405.0,328.1 406.5,328.3 408.0,329.6 409.5,329.9 411.0,330.4" fill="none" stroke="#76b22c" stroke-width="1" stroke-linejoin="round"/><polyline points="700.0,241.2 701.2,241.2 702.4,241.6 703.6,241.2 704.8,241.8 706.0,241.9 707.2,241.8 708.4,242.4 709.6,242.4 710.8,242.7 712.0,242.8 713.2,242.5 714.4,242.0 715.6,241.6 716.8,241.4 718.0,240.8 719.2,240.9 720.4,241.5 721.6,241.6 722.8,242.8 724.0,242.8 725.2,243.1 726.4,243.8 727.6,244.5 728.8,244.5 730.0,245.0 731.2,243.9 732.4,243.7 733.6,242.4 734.8,241.6 736.0,241.2 737.2,241.0 738.4,240.7 739.6,239.8 740.8,239.3 742.0,239.5 743.2,239.2 744.4,239.8 745.6,240.5 746.8,240.7 748.0,240.1 749.2,240.7 750.4,240.2 751.6,240.7 752.8,240.1 754.0,239.6 755.2,239.6 756.4,239.5 757.6,238.8 758.8,238.9 760.0,238.4 761.2,237.7 762.4,237.3 763.6,237.1 764.8,236.7 766.0,236.3 767.2,237.0 768.4,237.7 769.6,238.0 770.8,238.1 772.0,239.0 773.2,240.1 774.4,241.3" fill="none" stroke="#76b22c" stroke-width="1.2" stroke-linejoin="round"/><polyline points="52.5,507.5 53.5,507.4 54.5,507.6 55.5,507.6 56.5,507.4 57.5,507.8 58.5,508.2 59.5,507.8 60.5,508.0 61.5,508.1 62.5,508.1 63.5,508.2 64.5,507.7 65.5,508.0 66.5,507.5 67.5,508.1 68.5,507.7 69.5,507.8 70.5,508.2 71.5,507.6 72.5,507.5 73.5,508.1 74.5,507.9 75.5,507.4 76.5,507.4 77.5,507.7 78.5,507.4 79.5,508.1 80.5,507.5 81.5,507.6 82.5,507.7 83.5,507.8 84.5,507.7 85.5,507.9 86.5,507.9 87.5,507.7 88.5,507.4 89.5,508.2 90.5,508.0 91.5,507.4 92.5,507.7 93.5,508.0 94.5,508.2 95.5,507.4 96.5,507.4 97.5,507.8 98.5,507.7 99.5,508.2 100.5,508.1 101.5,507.6 102.5,507.7 103.5,507.9 104.5,508.1 105.5,507.5 106.5,507.7 107.5,507.4 108.5,507.9 109.5,507.4 110.5,508.2 111.5,507.8 112.5,507.9 113.5,507.4 114.5,507.6 115.5,507.8 116.5,508.1 117.5,507.8 118.5,507.6 119.5,508.2 120.5,507.9 121.5,506.3 122.5,499.7 123.5,483.2 124.5,467.1 125.5,463.2 126.5,461.3 127.5,460.0 128.5,458.4 129.5,457.4 130.5,456.5 131.5,457.1 132.5,457.7 133.5,457.9 134.5,458.4 135.5,459.4 136.5,460.0 137.5,460.1 138.5,460.8 139.5,460.4 140.5,461.0 141.5,461.2 142.5,460.6 143.5,461.4 144.5,461.1 145.5,444.3 146.5,428.1 147.5,429.6 148.5,451.5 149.5,472.9 150.5,477.4 151.5,481.4 152.5,484.8 153.5,486.5 154.5,487.2 155.5,487.8 156.5,488.6 157.5,489.3 158.5,490.5 159.5,490.6 160.5,490.2 161.5,490.0 162.5,490.0 163.5,489.9 164.5,489.4 165.5,489.8 166.5,489.5 167.5,490.0 168.5,490.1 169.5,489.9 170.5,490.5 171.5,490.3 172.5,490.4 173.5,490.2 174.5,490.0 175.5,489.6 176.5,489.0 177.5,489.5 178.5,489.3 179.5,488.6 180.5,488.4 181.5,487.8 182.5,488.0 183.5,487.9 184.5,488.0 185.5,489.0 186.5,489.7 187.5,489.6 188.5,490.5 189.5,490.2 190.5,490.0 191.5,490.6 192.5,490.4 193.5,490.9 194.5,490.9 195.5,490.0 196.5,490.0 197.5,489.9 198.5,489.1 199.5,488.8 200.5,488.7 201.5,487.9 202.5,487.5 203.5,488.1 204.5,488.9 205.5,488.9 206.5,489.4 207.5,490.4 208.5,490.6 209.5,490.7 210.5,491.6 211.5,492.0 212.5,492.0 213.5,492.8 214.5,492.5 215.5,492.1 216.5,491.4 217.5,490.8 218.5,491.1 219.5,490.9 220.5,490.3 221.5,490.4 222.5,490.4 223.5,490.1 224.5,490.4 225.5,490.3 226.5,490.1 227.5,489.8 228.5,490.1 229.5,489.9 230.5,490.1 231.5,489.6 232.5,489.7 233.5,489.4 234.5,489.6 235.5,489.6 236.5,489.1 237.5,489.0 238.5,489.3 239.5,489.0 240.5,489.2 241.5,488.8 242.5,488.6 243.5,488.7 244.5,488.7 245.5,488.3 246.5,487.6 247.5,487.1 248.5,486.5 249.5,486.3 250.5,486.0 251.5,486.2 252.5,485.0 253.5,485.4 254.5,484.6 255.5,484.2 256.5,484.0 257.5,484.5 258.5,483.6 259.5,483.9 260.5,483.7 261.5,483.3 262.5,483.2 263.5,483.7 264.5,483.4 265.5,483.3 266.5,483.3 267.5,482.4 268.5,482.9 269.5,482.8 270.5,482.1 271.5,482.2 272.5,482.5 273.5,481.8 274.5,482.0 275.5,481.4 276.5,481.7 277.5,481.2 278.5,481.2 279.5,481.0 280.5,481.3 281.5,481.1 282.5,480.7 283.5,480.8 284.5,480.5 285.5,480.7 286.5,480.1 287.5,480.2 288.5,480.2 289.5,479.9 290.5,479.5 291.5,479.5 292.5,479.8 293.5,479.3 294.5,479.6 295.5,479.1 296.5,479.3 297.5,478.9 298.5,478.6 299.5,478.0 300.5,477.5 301.5,477.7 302.5,477.6 303.5,477.5 304.5,476.6 305.5,476.3 306.5,476.8 307.5,476.0 308.5,475.1 309.5,474.7 310.5,473.4 311.5,473.1 312.5,473.1 313.5,472.9 314.5,472.4 315.5,472.3 316.5,472.6 317.5,472.7 318.5,471.9 319.5,471.7 320.5,471.7 321.5,472.2 322.5,471.8 323.5,471.7 324.5,472.1 325.5,471.6 326.5,471.2 327.5,471.5 328.5,470.8 329.5,470.9 330.5,471.2 331.5,470.6 332.5,470.4 333.5,470.7 334.5,470.4 335.5,470.9 336.5,470.0 337.5,470.5 338.5,470.1 339.5,470.3 340.5,469.9 341.5,469.9 342.5,469.5 343.5,469.3 344.5,469.3 345.5,469.5 346.5,469.0 347.5,468.7 348.5,468.7 349.5,468.3 350.5,468.4 351.5,468.5 352.5,468.3 353.5,468.2 354.5,467.8 355.5,467.4 356.5,467.3 357.5,467.4 358.5,467.2 359.5,467.4 360.5,466.9 361.5,467.2 362.5,467.0 363.5,466.9 364.5,466.8 365.5,466.5 366.5,466.3 367.5,466.0 368.5,465.6 369.5,466.2 370.5,465.8 371.5,465.3 372.5,465.9 373.5,465.4 374.5,465.3 375.5,465.0 376.5,464.6 377.5,465.2 378.5,464.4 379.5,464.4 380.5,464.8 381.5,463.9 382.5,464.1 383.5,463.9 384.5,463.6 385.5,464.1 386.5,463.5 387.5,463.0 388.5,463.2 389.5,462.7 390.5,463.2 391.5,463.2 392.5,463.1 393.5,462.2 394.5,462.6 395.5,462.1 396.5,462.1 397.5,461.8 398.5,461.7 399.5,461.4 400.5,461.7 401.5,461.1 402.5,461.7 403.5,460.8 404.5,461.5 405.5,460.6 406.5,460.4 407.5,460.8 408.5,460.5 409.5,460.6 410.5,460.2 411.5,460.2" fill="none" stroke="#76b22c" stroke-width="1" stroke-linejoin="round"/><polyline points="416.5,507.2 417.5,507.6 418.5,507.5 419.5,507.8 420.5,507.2 421.5,507.2 422.5,507.6 423.5,507.8 424.5,507.5 425.5,507.6 426.5,507.5 427.5,507.4 428.5,507.5 429.5,507.6 430.5,507.2 431.5,507.4 432.5,507.6 433.5,507.4 434.5,507.5 435.5,507.4 436.5,507.4 437.5,507.6 438.5,507.6 439.5,507.8 440.5,507.5 441.5,507.3 442.5,507.4 443.5,507.2 444.5,507.3 445.5,507.6 446.5,507.6 447.5,507.3 448.5,507.3 449.5,507.3 450.5,507.3 451.5,507.5 452.5,507.4 453.5,507.7 454.5,507.5 455.5,507.4 456.5,507.5 457.5,507.2 458.5,507.6 459.5,507.7 460.5,507.4 461.5,507.6 462.5,507.4 463.5,507.3 464.5,507.3 465.5,507.3 466.5,507.6 467.5,507.6 468.5,507.6 469.5,507.3 470.5,507.7 471.5,507.5 472.5,507.4 473.5,507.5 474.5,507.5 475.5,507.3 476.5,507.4 477.5,507.6 478.5,507.6 479.5,507.7 480.5,507.3 481.5,507.7 482.5,507.7 483.5,507.6 484.5,507.8 485.5,507.3 486.5,501.4 487.5,487.7 488.5,479.8 489.5,480.1 490.5,480.3 491.5,479.9 492.5,480.2 493.5,480.2 494.5,480.0 495.5,479.8 496.5,479.8 497.5,480.2 498.5,480.0 499.5,479.9 500.5,480.0 501.5,480.3 502.5,479.9 503.5,479.7 504.5,480.3 505.5,479.9 506.5,479.9 507.5,480.3 508.5,479.9 509.5,479.8 510.5,480.2 511.5,479.8 512.5,479.8 513.5,480.3 514.5,479.8 515.5,480.2 516.5,479.9 517.5,479.9 518.5,479.8 519.5,480.0 520.5,480.0 521.5,479.9 522.5,480.0 523.5,479.9 524.5,480.2 525.5,480.3 526.5,480.2 527.5,480.2 528.5,479.7 529.5,479.9 530.5,479.8 531.5,479.8 532.5,480.3 533.5,480.2 534.5,480.2 535.5,480.0 536.5,479.8 537.5,480.0 538.5,479.7 539.5,480.2 540.5,479.9 541.5,479.9 542.5,480.3 543.5,479.8 544.5,480.3 545.5,479.9 546.5,480.1 547.5,479.8 548.5,480.2 549.5,479.9 550.5,479.9 551.5,480.1 552.5,480.1 553.5,479.9 554.5,479.8 555.5,480.0 556.5,479.7 557.5,480.2 558.5,479.9 559.5,479.8 560.5,479.9 561.5,479.8 562.5,479.9 563.5,480.0 564.5,479.9 565.5,479.9 566.5,479.9 567.5,480.0 568.5,480.2 569.5,480.0 570.5,480.2 571.5,480.0 572.5,479.8 573.5,479.8 574.5,480.2 575.5,480.0 576.5,479.9 577.5,480.0 578.5,480.2 579.5,479.9 580.5,479.9 581.5,479.9 582.5,479.7 583.5,480.0 584.5,480.0 585.5,480.0 586.5,480.0 587.5,480.0 588.5,480.1 589.5,479.8 590.5,480.3 591.5,479.8 592.5,480.2 593.5,479.8 594.5,480.2 595.5,479.9 596.5,479.7 597.5,480.0 598.5,480.2 599.5,480.2 600.5,480.2 601.5,480.3 602.5,479.7 603.5,479.9 604.5,479.8 605.5,480.2 606.5,480.0 607.5,480.1 608.5,480.2 609.5,480.3 610.5,480.1 611.5,480.2 612.5,480.0 613.5,479.7 614.5,480.2 615.5,479.8 616.5,479.8 617.5,480.2 618.5,479.9 619.5,480.1 620.5,479.7 621.5,479.8 622.5,480.1 623.5,479.7 624.5,480.0 625.5,480.3 626.5,479.8 627.5,480.1 628.5,480.1 629.5,480.1 630.5,480.2 631.5,480.1 632.5,479.7 633.5,479.8 634.5,480.0 635.5,480.3 636.5,479.8 637.5,480.1 638.5,479.8 639.5,480.2 640.5,480.0 641.5,480.0 642.5,480.1 643.5,479.8 644.5,480.1 645.5,480.2 646.5,480.2 647.5,479.9 648.5,479.8 649.5,479.8 650.5,480.2 651.5,480.0 652.5,479.9 653.5,480.0 654.5,480.1 655.5,479.9 656.5,479.9 657.5,480.2 658.5,480.2 659.5,479.9 660.5,479.7 661.5,480.3 662.5,480.1 663.5,480.1 664.5,479.9 665.5,480.3 666.5,480.0 667.5,479.8 668.5,479.8 669.5,479.9 670.5,480.1 671.5,479.9 672.5,480.3 673.5,480.1 674.5,480.0 675.5,480.1 676.5,480.1 677.5,480.1 678.5,480.0 679.5,480.0 680.5,480.0 681.5,480.2 682.5,479.8 683.5,480.2 684.5,479.9 685.5,480.2 686.5,479.7 687.5,480.0 688.5,480.0 689.5,480.1 690.5,479.8 691.5,479.9 692.5,479.8 693.5,480.0 694.5,480.0 695.5,479.7 696.5,479.8 697.5,479.8 698.5,480.3 699.5,480.0 700.5,479.9 701.5,479.6 702.5,479.6 703.5,479.6 704.5,479.3 705.5,478.7 706.5,478.8 707.5,478.6 708.5,478.2 709.5,478.4 710.5,478.0 711.5,476.5 712.5,474.1 713.5,471.4 714.5,468.6 715.5,466.1 716.5,463.1 717.5,460.3 718.5,458.2 719.5,457.3 720.5,456.1 721.5,455.1 722.5,454.2 723.5,453.6 724.5,453.3 725.5,453.0 726.5,452.6 727.5,452.6 728.5,452.1 729.5,451.5 730.5,451.4 731.5,450.9 732.5,450.2 733.5,450.2 734.5,449.4 735.5,449.4 736.5,448.5 737.5,448.2 738.5,447.7 739.5,447.6 740.5,447.2 741.5,449.0 742.5,450.8 743.5,454.0 744.5,458.1 745.5,461.7 746.5,465.5 747.5,468.0 748.5,470.5 749.5,472.9 750.5,474.6 751.5,475.8 752.5,476.4 753.5,477.4 754.5,478.3 755.5,479.1 756.5,479.9 757.5,480.0 758.5,480.9 759.5,481.2 760.5,482.0 761.5,482.4 762.5,482.7 763.5,483.1 764.5,482.9 765.5,483.2 766.5,483.5 767.5,483.8 768.5,484.2 769.5,484.6 770.5,484.7 771.5,485.0 772.5,485.0 773.5,485.0 774.5,485.2 775.5,485.5 776.5,485.7" fill="none" stroke="#76b22c" stroke-width="1" stroke-linejoin="round"/><polygon points="769,115.5 777,111.0 777,120.0" fill="#5ee000"/><polygon points="769,294.5 777,290.0 777,299.0" fill="#5ee000"/><polygon points="769,466.7 777,462.2 777,471.2" fill="#5ee000"/></svg>
<div class="a t" style="left:53px;top:27px;width:19px;height:11px;line-height:11px;background:#5a6872;color:#c9d0d6;font-size:7px;text-align:center">Trc1</div>
<div class="a t" style="left:72px;top:27px;width:26px;height:11px;line-height:11px;background:#5fe000;color:#103000;font-size:7px;text-align:center">Sdd11</div>
<div class="a t" style="left:98px;top:27px;width:89px;height:11px;line-height:11px;background:#4d5a65;color:#c9d0d6;font-size:7px;text-align:center">dB Mag&nbsp;&nbsp; 5 dB/ Ref -25 dB</div>
<div class="a t" style="left:417px;top:27px;width:19px;height:11px;line-height:11px;background:#5a6872;color:#c9d0d6;font-size:7px;text-align:center">Trc2</div>
<div class="a t" style="left:436px;top:27px;width:26px;height:11px;line-height:11px;background:#5fe000;color:#103000;font-size:7px;text-align:center">Sdd12</div>
<div class="a t" style="left:462px;top:27px;width:89px;height:11px;line-height:11px;background:#4d5a65;color:#c9d0d6;font-size:7px;text-align:center">dB Mag&nbsp;&nbsp; 5 dB/ Ref -20 dB</div>
<div class="a t" style="left:53px;top:206.5px;width:19px;height:10.5px;line-height:10.5px;background:#5a6872;color:#c9d0d6;font-size:7px;text-align:center">Trc3</div>
<div class="a t" style="left:72px;top:206.5px;width:26px;height:10.5px;line-height:10.5px;background:#5fe000;color:#103000;font-size:7px;text-align:center">Sdd21</div>
<div class="a t" style="left:98px;top:206.5px;width:89px;height:10.5px;line-height:10.5px;background:#4d5a65;color:#c9d0d6;font-size:7px;text-align:center">dB Mag&nbsp;&nbsp; 5 dB/ Ref -20 dB</div>
<div class="a t" style="left:53px;top:386px;width:19px;height:10.5px;line-height:10.5px;background:#5a6872;color:#c9d0d6;font-size:7px;text-align:center">Trc5</div>
<div class="a t" style="left:72px;top:386px;width:36px;height:10.5px;line-height:10.5px;background:#5fe000;color:#103000;font-size:7px;text-align:center">Z&larr;Sdd11</div>
<div class="a t" style="left:108px;top:386px;width:87px;height:10.5px;line-height:10.5px;background:#4d5a65;color:#c9d0d6;font-size:7px;text-align:center">Lin Mag&nbsp;&nbsp; 5 &Omega;/ Ref 100 &Omega;</div>
<div class="a t" style="left:393.5px;top:27.5px;width:18.5px;height:10.5px;line-height:10.5px;background:#1b2127;color:#dfe3e6;font-size:7.5px;padding-left:0px">&nbsp;1</div>
<svg class="a" style="left:402.5px;top:30.5px" width="8" height="5"><polyline points="1,1 4,4 7,1" fill="none" stroke="#e0e4e8" stroke-width="1.2"/></svg>
<div class="a t" style="left:757px;top:27px;width:18.5px;height:11px;line-height:11px;background:#1b2127;color:#dfe3e6;font-size:7.5px;padding-left:0px">&nbsp;2</div>
<svg class="a" style="left:766px;top:30px" width="8" height="5"><polyline points="1,1 4,4 7,1" fill="none" stroke="#e0e4e8" stroke-width="1.2"/></svg>
<div class="a t" style="left:757px;top:206px;width:18.5px;height:10.5px;line-height:10.5px;background:#1b2127;color:#dfe3e6;font-size:7.5px;padding-left:0px">&nbsp;4</div>
<svg class="a" style="left:766px;top:209px" width="8" height="5"><polyline points="1,1 4,4 7,1" fill="none" stroke="#e0e4e8" stroke-width="1.2"/></svg>
<div class="a t" style="left:757px;top:386px;width:18.5px;height:9.5px;line-height:9.5px;background:#1b2127;color:#dfe3e6;font-size:7.5px;padding-left:0px">&nbsp;6</div>
<svg class="a" style="left:766px;top:389px" width="8" height="5"><polyline points="1,1 4,4 7,1" fill="none" stroke="#e0e4e8" stroke-width="1.2"/></svg>
<div class="a t" style="left:52px;top:191px;width:16.5px;height:10px;line-height:10px;background:#1f78cc;color:#e8f0f8;font-size:7px;text-align:center">Ch1</div>
<div class="a t" style="left:71.5px;top:192.30px;font-size:7px;line-height:8.40px;color:#d2d4d6;">Start</div>
<div class="a t" style="left:95.5px;top:192.30px;font-size:7px;line-height:8.40px;color:#d2d4d6;">10 MHz</div>
<div class="a t" style="left:181.5px;top:192.30px;font-size:7px;line-height:8.40px;color:#d2d4d6;">Pwr</div>
<div class="a t" style="left:202.5px;top:192.30px;font-size:7px;line-height:8.40px;color:#d2d4d6;">-10 dBm</div>
<div class="a t" style="left:236.5px;top:192.30px;font-size:7px;line-height:8.40px;color:#d2d4d6;">Bw</div>
<div class="a t" style="left:254px;top:192.30px;font-size:7px;line-height:8.40px;color:#d2d4d6;">1 kHz</div>
<div class="a t" style="left:364px;top:192.30px;font-size:7px;line-height:8.40px;color:#d2d4d6;">Stop</div>
<div class="a t" style="left:386.5px;top:192.30px;font-size:7px;line-height:8.40px;color:#d2d4d6;">40 GHz</div>
<div class="a t" style="left:416.3px;top:191px;width:16.5px;height:10px;line-height:10px;background:#1f78cc;color:#e8f0f8;font-size:7px;text-align:center">Ch1</div>
<div class="a t" style="left:435.8px;top:192.30px;font-size:7px;line-height:8.40px;color:#d2d4d6;">Start</div>
<div class="a t" style="left:459.8px;top:192.30px;font-size:7px;line-height:8.40px;color:#d2d4d6;">10 MHz</div>
<div class="a t" style="left:545.8px;top:192.30px;font-size:7px;line-height:8.40px;color:#d2d4d6;">Pwr</div>
<div class="a t" style="left:566.8px;top:192.30px;font-size:7px;line-height:8.40px;color:#d2d4d6;">-10 dBm</div>
<div class="a t" style="left:600.8px;top:192.30px;font-size:7px;line-height:8.40px;color:#d2d4d6;">Bw</div>
<div class="a t" style="left:618.3px;top:192.30px;font-size:7px;line-height:8.40px;color:#d2d4d6;">1 kHz</div>
<div class="a t" style="left:728.3px;top:192.30px;font-size:7px;line-height:8.40px;color:#d2d4d6;">Stop</div>
<div class="a t" style="left:750.8px;top:192.30px;font-size:7px;line-height:8.40px;color:#d2d4d6;">40 GHz</div>
<div class="a t" style="left:52px;top:370.5px;width:16.5px;height:10.0px;line-height:10.0px;background:#1f78cc;color:#e8f0f8;font-size:7px;text-align:center">Ch1</div>
<div class="a t" style="left:71.5px;top:371.80px;font-size:7px;line-height:8.40px;color:#d2d4d6;">Start</div>
<div class="a t" style="left:95.5px;top:371.80px;font-size:7px;line-height:8.40px;color:#d2d4d6;">10 MHz</div>
<div class="a t" style="left:181.5px;top:371.80px;font-size:7px;line-height:8.40px;color:#d2d4d6;">Pwr</div>
<div class="a t" style="left:202.5px;top:371.80px;font-size:7px;line-height:8.40px;color:#d2d4d6;">-10 dBm</div>
<div class="a t" style="left:236.5px;top:371.80px;font-size:7px;line-height:8.40px;color:#d2d4d6;">Bw</div>
<div class="a t" style="left:254px;top:371.80px;font-size:7px;line-height:8.40px;color:#d2d4d6;">1 kHz</div>
<div class="a t" style="left:364px;top:371.80px;font-size:7px;line-height:8.40px;color:#d2d4d6;">Stop</div>
<div class="a t" style="left:386.5px;top:371.80px;font-size:7px;line-height:8.40px;color:#d2d4d6;">40 GHz</div>
<div class="a t" style="left:416.3px;top:370.5px;width:16.5px;height:10.0px;line-height:10.0px;background:#1f78cc;color:#e8f0f8;font-size:7px;text-align:center">Ch1</div>
<div class="a t" style="left:435.8px;top:371.80px;font-size:7px;line-height:8.40px;color:#d2d4d6;">Start</div>
<div class="a t" style="left:459.8px;top:371.80px;font-size:7px;line-height:8.40px;color:#d2d4d6;">10 MHz</div>
<div class="a t" style="left:545.8px;top:371.80px;font-size:7px;line-height:8.40px;color:#d2d4d6;">Pwr</div>
<div class="a t" style="left:566.8px;top:371.80px;font-size:7px;line-height:8.40px;color:#d2d4d6;">-10 dBm</div>
<div class="a t" style="left:600.8px;top:371.80px;font-size:7px;line-height:8.40px;color:#d2d4d6;">Bw</div>
<div class="a t" style="left:618.3px;top:371.80px;font-size:7px;line-height:8.40px;color:#d2d4d6;">1 kHz</div>
<div class="a t" style="left:728.3px;top:371.80px;font-size:7px;line-height:8.40px;color:#d2d4d6;">Stop</div>
<div class="a t" style="left:750.8px;top:371.80px;font-size:7px;line-height:8.40px;color:#d2d4d6;">40 GHz</div>
<div class="a t" style="left:52px;top:537.3px;width:16.5px;height:10.0px;line-height:10.0px;background:#1f78cc;color:#e8f0f8;font-size:7px;text-align:center">Ch1</div>
<div class="a t" style="left:71.5px;top:538.60px;font-size:7px;line-height:8.40px;color:#d2d4d6;">Start</div>
<div class="a t" style="left:95.5px;top:538.60px;font-size:7px;line-height:8.40px;color:#d2d4d6;">10 MHz</div>
<div class="a t" style="left:181.5px;top:538.60px;font-size:7px;line-height:8.40px;color:#d2d4d6;">Pwr</div>
<div class="a t" style="left:202.5px;top:538.60px;font-size:7px;line-height:8.40px;color:#d2d4d6;">-10 dBm</div>
<div class="a t" style="left:236.5px;top:538.60px;font-size:7px;line-height:8.40px;color:#d2d4d6;">Bw</div>
<div class="a t" style="left:254px;top:538.60px;font-size:7px;line-height:8.40px;color:#d2d4d6;">1 kHz</div>
<div class="a t" style="left:364px;top:538.60px;font-size:7px;line-height:8.40px;color:#d2d4d6;">Stop</div>
<div class="a t" style="left:386.5px;top:538.60px;font-size:7px;line-height:8.40px;color:#d2d4d6;">40 GHz</div>
<div class="a t" style="left:416.3px;top:537.3px;width:16.5px;height:10.0px;line-height:10.0px;background:#1f78cc;color:#e8f0f8;font-size:7px;text-align:center">Ch1</div>
<div class="a t" style="left:435.8px;top:538.60px;font-size:7px;line-height:8.40px;color:#d2d4d6;">Start</div>
<div class="a t" style="left:459.8px;top:538.60px;font-size:7px;line-height:8.40px;color:#d2d4d6;">10 MHz</div>
<div class="a t" style="left:545.8px;top:538.60px;font-size:7px;line-height:8.40px;color:#d2d4d6;">Pwr</div>
<div class="a t" style="left:566.8px;top:538.60px;font-size:7px;line-height:8.40px;color:#d2d4d6;">-10 dBm</div>
<div class="a t" style="left:600.8px;top:538.60px;font-size:7px;line-height:8.40px;color:#d2d4d6;">Bw</div>
<div class="a t" style="left:618.3px;top:538.60px;font-size:7px;line-height:8.40px;color:#d2d4d6;">1 kHz</div>
<div class="a t" style="left:728.3px;top:538.60px;font-size:7px;line-height:8.40px;color:#d2d4d6;">Stop</div>
<div class="a t" style="left:750.8px;top:538.60px;font-size:7px;line-height:8.40px;color:#d2d4d6;">40 GHz</div>
<div class="a t" style="left:52.5px;top:550.80px;font-size:7px;line-height:8.40px;color:#d2d4d6;">Trc5</div>
<div class="a t" style="left:71.5px;top:550.80px;font-size:7px;line-height:8.40px;color:#d2d4d6;">Start</div>
<div class="a t" style="left:95.5px;top:550.80px;font-size:7px;line-height:8.40px;color:#d2d4d6;">-1 ns</div>
<div class="a t" style="left:213px;top:550.80px;font-size:7px;line-height:8.40px;color:#d2d4d6;">Time</div>
<div class="a t" style="left:236.5px;top:550.80px;font-size:7px;line-height:8.40px;color:#d2d4d6;">Domain</div>
<div class="a t" style="left:364px;top:550.80px;font-size:7px;line-height:8.40px;color:#d2d4d6;">Stop</div>
<div class="a t" style="left:386.5px;top:550.80px;font-size:7px;line-height:8.40px;color:#d2d4d6;">4 ns</div>
<div class="a" style="left:124px;top:554.0px;width:6.5px;height:1.0px;background:#76b22c;"></div>
<div class="a t" style="left:416.5px;top:549.5px;width:15.5px;height:10px;line-height:10px;background:#1f78cc;color:#e8f0f8;font-size:7px;text-align:center">Trc6</div>
<div class="a t" style="left:435.8px;top:550.80px;font-size:7px;line-height:8.40px;color:#d2d4d6;">Start</div>
<div class="a t" style="left:459.8px;top:550.80px;font-size:7px;line-height:8.40px;color:#d2d4d6;">-1 ns</div>
<div class="a t" style="left:577.3px;top:550.80px;font-size:7px;line-height:8.40px;color:#d2d4d6;">Time</div>
<div class="a t" style="left:600.8px;top:550.80px;font-size:7px;line-height:8.40px;color:#d2d4d6;">Domain</div>
<div class="a t" style="left:728.3px;top:550.80px;font-size:7px;line-height:8.40px;color:#d2d4d6;">Stop</div>
<div class="a t" style="left:750.8px;top:550.80px;font-size:7px;line-height:8.40px;color:#d2d4d6;">4 ns</div>
<div class="a" style="left:488.3px;top:554.0px;width:6.5px;height:1.0px;background:#76b22c;"></div>
<div class="a" style="left:51px;top:561px;width:726px;height:15px;background:#1c232b;"></div>
<div class="a t" style="left:53.5px;top:564.88px;font-size:7.2px;line-height:8.64px;color:#dde1e4;">File</div>
<div class="a t" style="left:71px;top:564.88px;font-size:7.2px;line-height:8.64px;color:#dde1e4;">Trace</div>
<div class="a t" style="left:94.5px;top:564.88px;font-size:7.2px;line-height:8.64px;color:#dde1e4;">Channel</div>
<div class="a t" style="left:126.5px;top:564.88px;font-size:7.2px;line-height:8.64px;color:#dde1e4;">Display</div>
<div class="a t" style="left:157px;top:564.88px;font-size:7.2px;line-height:8.64px;color:#dde1e4;">Application</div>
<div class="a t" style="left:200.5px;top:564.88px;font-size:7.2px;line-height:8.64px;color:#dde1e4;">System</div>
<div class="a t" style="left:229.5px;top:564.88px;font-size:7.2px;line-height:8.64px;color:#dde1e4;">Help</div>
<div class="a" style="left:777px;top:0px;width:195px;height:561px;background:#000;"></div>
<div class="a" style="left:778px;top:0px;width:81px;height:561px;background:#1c232b;"></div>
<div class="a" style="left:778px;top:0px;width:126px;height:25px;background:#1c232b;"></div>
<div class="a" style="left:778px;top:25px;width:126px;height:2.5px;background:#07090b;"></div>
<div class="a" style="left:861px;top:27.5px;width:43px;height:533.5px;background:#1c232b;"></div>
<div class="a" style="left:907px;top:0px;width:65px;height:561px;background:#1c232b;"></div>
<div class="a t" style="left:785.5px;top:4.58px;font-size:13.2px;line-height:15.84px;color:#eef0f2;">Offset Embed</div>
<svg class="a" style="left:887px;top:7px" width="12" height="11"><path d="M1.5,1.5 L10.5,9.5 M10.5,1.5 L1.5,9.5" stroke="#f2f4f6" stroke-width="2.2"/></svg>
<div class="a" style="left:780px;top:28.5px;width:77px;height:23.5px;background:#4a5c6b;"></div>
<div class="a t" style="left:783.5px;top:31.95px;font-size:7.5px;line-height:9.00px;color:#e4e8eb;">Delta-L</div>
<div class="a t" style="left:783.5px;top:40.55px;font-size:7.5px;line-height:9.00px;color:#e4e8eb;">Settings...</div>
<svg class="a" style="left:839.5px;top:33.5px" width="15" height="15" viewBox="0 0 15 15"><circle cx="4.4" cy="4.4" r="2.7" fill="none" stroke="#f0f2f4" stroke-width="1.9"/><line x1="6" y1="6" x2="12.8" y2="12.8" stroke="#f0f2f4" stroke-width="2" stroke-linecap="round"/><rect x="-1" y="2.2" width="5" height="2.4" fill="#4a5c6b" transform="rotate(45 1.5 3.4)"/></svg>
<div class="a" style="left:780px;top:56px;width:77px;height:23px;background:#4a5c6b;"></div>
<div class="a t" style="left:783.5px;top:59.20px;font-size:7.5px;line-height:9.00px;color:#e4e8eb;">Delta-L</div>
<div class="a t" style="left:783.5px;top:67.80px;font-size:7.5px;line-height:9.00px;color:#e4e8eb;">Measurement</div>
<svg class="a" style="left:839.5px;top:61px" width="15" height="15" viewBox="0 0 15 15"><circle cx="4.4" cy="4.4" r="2.7" fill="none" stroke="#f0f2f4" stroke-width="1.9"/><line x1="6" y1="6" x2="12.8" y2="12.8" stroke="#f0f2f4" stroke-width="2" stroke-linecap="round"/><rect x="-1" y="2.2" width="5" height="2.4" fill="#4a5c6b" transform="rotate(45 1.5 3.4)"/></svg>
<div class="a" style="left:861px;top:28.0px;width:43px;height:25.6px;background:#1e252c;"></div>
<div class="a t" style="left:863.8px;top:36.80px;font-size:7.5px;line-height:9.00px;color:#e4e8eb;">Offset</div>
<div class="a" style="left:861px;top:55.3px;width:43px;height:25.60000000000001px;background:#1e252c;"></div>
<div class="a t" style="left:863.8px;top:59.83px;font-size:7.5px;line-height:9.00px;color:#e4e8eb;">One Way</div>
<div class="a t" style="left:863.8px;top:68.43px;font-size:7.5px;line-height:9.00px;color:#e4e8eb;">Loss</div>
<div class="a" style="left:861px;top:82.7px;width:43px;height:25.599999999999994px;background:#1e252c;"></div>
<div class="a t" style="left:863.8px;top:87.16px;font-size:7.5px;line-height:9.00px;color:#e4e8eb;">Single</div>
<div class="a t" style="left:863.8px;top:95.76px;font-size:7.5px;line-height:9.00px;color:#e4e8eb;">Ended</div>
<div class="a" style="left:861px;top:110.0px;width:43px;height:25.599999999999994px;background:#1e252c;"></div>
<div class="a t" style="left:863.8px;top:114.49px;font-size:7.5px;line-height:9.00px;color:#e4e8eb;">Port</div>
<div class="a t" style="left:863.8px;top:123.09px;font-size:7.5px;line-height:9.00px;color:#e4e8eb;">Sets</div>
<div class="a" style="left:861px;top:137.3px;width:43px;height:25.599999999999994px;background:#1e252c;"></div>
<div class="a t" style="left:863.8px;top:146.12px;font-size:7.5px;line-height:9.00px;color:#e4e8eb;">Balanced</div>
<div class="a" style="left:861px;top:164.6px;width:43px;height:25.599999999999994px;background:#1e252c;"></div>
<div class="a t" style="left:863.8px;top:169.15px;font-size:7.5px;line-height:9.00px;color:#e4e8eb;">Ground</div>
<div class="a t" style="left:863.8px;top:177.75px;font-size:7.5px;line-height:9.00px;color:#e4e8eb;">Loop</div>
<div class="a" style="left:861px;top:192.0px;width:43px;height:25.599999999999994px;background:#1e252c;"></div>
<div class="a t" style="left:863.8px;top:196.48px;font-size:7.5px;line-height:9.00px;color:#e4e8eb;">Diff.</div>
<div class="a t" style="left:863.8px;top:205.08px;font-size:7.5px;line-height:9.00px;color:#e4e8eb;">Match</div>
<div class="a" style="left:861px;top:219.3px;width:43px;height:25.599999999999994px;background:#1e252c;"></div>
<div class="a t" style="left:863.8px;top:228.11px;font-size:7.5px;line-height:9.00px;color:#e4e8eb;">Config</div>
<div class="a" style="left:861px;top:246.6px;width:43px;height:25.599999999999994px;background:#1e252c;"></div>
<div class="a t" style="left:863.8px;top:251.14px;font-size:7.5px;line-height:9.00px;color:#e4e8eb;">Deembed</div>
<div class="a t" style="left:863.8px;top:259.74px;font-size:7.5px;line-height:9.00px;color:#e4e8eb;">Assistant</div>
<div class="a" style="left:861px;top:274.0px;width:43px;height:25.600000000000023px;background:#4a5c6b;"></div>
<div class="a t" style="left:863.8px;top:282.77px;font-size:7.5px;line-height:9.00px;color:#e4e8eb;">Delta-L</div>
<div class="a" style="left:861px;top:53.6px;width:43px;height:1.6999999999999957px;background:#0a0d10;"></div>
<div class="a" style="left:861px;top:80.9px;width:43px;height:1.7999999999999972px;background:#0a0d10;"></div>
<div class="a" style="left:861px;top:108.3px;width:43px;height:1.7000000000000028px;background:#0a0d10;"></div>
<div class="a" style="left:861px;top:135.6px;width:43px;height:1.700000000000017px;background:#0a0d10;"></div>
<div class="a" style="left:861px;top:162.9px;width:43px;height:1.6999999999999886px;background:#0a0d10;"></div>
<div class="a" style="left:861px;top:190.2px;width:43px;height:1.8000000000000114px;background:#0a0d10;"></div>
<div class="a" style="left:861px;top:217.6px;width:43px;height:1.700000000000017px;background:#0a0d10;"></div>
<div class="a" style="left:861px;top:244.9px;width:43px;height:1.6999999999999886px;background:#0a0d10;"></div>
<div class="a" style="left:861px;top:272.2px;width:43px;height:1.8000000000000114px;background:#0a0d10;"></div>
<div class="a" style="left:861px;top:299.6px;width:43px;height:1.6999999999999886px;background:#0a0d10;"></div>
<div class="a" style="left:861px;top:25.5px;width:43px;height:2.5px;background:#0a0d10;"></div>
<div class="a t" style="left:907px;width:65px;text-align:center;top:2.90px;font-size:7.5px;line-height:9.00px;color:#e4e8eb;">Trace</div>
<div class="a" style="left:908px;top:14px;width:30.299999999999955px;height:23px;background:#4a5c6b;"></div>
<div class="a t" style="left:905px;width:36.299999999999955px;text-align:center;top:21.50px;font-size:7.5px;line-height:9.00px;color:#e4e8eb;">Meas</div>
<div class="a" style="left:940px;top:14px;width:30.5px;height:23px;background:#4a5c6b;"></div>
<div class="a t" style="left:937px;width:36.5px;text-align:center;top:21.50px;font-size:7.5px;line-height:9.00px;color:#e4e8eb;">Format</div>
<div class="a" style="left:908px;top:39.5px;width:30.299999999999955px;height:23.0px;background:#4a5c6b;"></div>
<div class="a t" style="left:905px;width:36.299999999999955px;text-align:center;top:47.00px;font-size:7.5px;line-height:9.00px;color:#e4e8eb;">Scale</div>
<div class="a" style="left:940px;top:39.5px;width:30.5px;height:23.0px;background:#4a5c6b;"></div>
<div class="a t" style="left:937px;width:36.5px;text-align:center;top:42.70px;font-size:7.5px;line-height:9.00px;color:#e4e8eb;">Trace</div>
<div class="a t" style="left:937px;width:36.5px;text-align:center;top:51.30px;font-size:7.5px;line-height:9.00px;color:#e4e8eb;">Config</div>
<div class="a" style="left:908px;top:65px;width:30.299999999999955px;height:23px;background:#4a5c6b;"></div>
<div class="a t" style="left:905px;width:36.299999999999955px;text-align:center;top:72.50px;font-size:7.5px;line-height:9.00px;color:#e4e8eb;">Line</div>
<div class="a" style="left:940px;top:65px;width:30.5px;height:23px;background:#4a5c6b;"></div>
<div class="a t" style="left:937px;width:36.5px;text-align:center;top:72.50px;font-size:7.5px;line-height:9.00px;color:#e4e8eb;">Marker</div>
<div class="a t" style="left:907px;width:65px;text-align:center;top:91.25px;font-size:7.5px;line-height:9.00px;color:#e4e8eb;">Stimulus</div>
<div class="a" style="left:908px;top:103px;width:30.299999999999955px;height:23px;background:#4a5c6b;"></div>
<div class="a t" style="left:905px;width:36.299999999999955px;text-align:center;top:110.50px;font-size:7.5px;line-height:9.00px;color:#e4e8eb;">Start</div>
<div class="a" style="left:940px;top:103px;width:30.5px;height:23px;background:#4a5c6b;"></div>
<div class="a t" style="left:937px;width:36.5px;text-align:center;top:110.50px;font-size:7.5px;line-height:9.00px;color:#e4e8eb;">Stop</div>
<div class="a" style="left:908px;top:128px;width:30.299999999999955px;height:23px;background:#4a5c6b;"></div>
<div class="a t" style="left:905px;width:36.299999999999955px;text-align:center;top:135.50px;font-size:7.5px;line-height:9.00px;color:#e4e8eb;">Center</div>
<div class="a" style="left:940px;top:128px;width:30.5px;height:23px;background:#4a5c6b;"></div>
<div class="a t" style="left:937px;width:36.5px;text-align:center;top:135.50px;font-size:7.5px;line-height:9.00px;color:#e4e8eb;">Span</div>
<div class="a t" style="left:907px;width:65px;text-align:center;top:154.50px;font-size:7.5px;line-height:9.00px;color:#e4e8eb;">Channel</div>
<div class="a" style="left:908px;top:166.5px;width:30.299999999999955px;height:22.5px;background:#4a5c6b;"></div>
<div class="a t" style="left:905px;width:36.299999999999955px;text-align:center;top:169.45px;font-size:7.5px;line-height:9.00px;color:#e4e8eb;">Channel</div>
<div class="a t" style="left:905px;width:36.299999999999955px;text-align:center;top:178.05px;font-size:7.5px;line-height:9.00px;color:#e4e8eb;">Config</div>
<div class="a" style="left:940px;top:166.5px;width:30.5px;height:22.5px;background:#4a5c6b;"></div>
<div class="a t" style="left:937px;width:36.5px;text-align:center;top:173.75px;font-size:7.5px;line-height:9.00px;color:#e4e8eb;">Sweep</div>
<div class="a" style="left:908px;top:191.5px;width:30.299999999999955px;height:23.30000000000001px;background:#4a5c6b;"></div>
<div class="a t" style="left:905px;width:36.299999999999955px;text-align:center;top:194.85px;font-size:7.5px;line-height:9.00px;color:#e4e8eb;">Power</div>
<div class="a t" style="left:905px;width:36.299999999999955px;text-align:center;top:203.45px;font-size:7.5px;line-height:9.00px;color:#e4e8eb;">Bw Avg</div>
<div class="a" style="left:940px;top:191.5px;width:30.5px;height:23.30000000000001px;background:#4a5c6b;"></div>
<div class="a t" style="left:937px;width:36.5px;text-align:center;top:199.15px;font-size:7.5px;line-height:9.00px;color:#e4e8eb;">Trigger</div>
<div class="a" style="left:908px;top:217px;width:30.299999999999955px;height:23px;background:#4a5c6b;"></div>
<div class="a t" style="left:905px;width:36.299999999999955px;text-align:center;top:224.50px;font-size:7.5px;line-height:9.00px;color:#e4e8eb;">Cal</div>
<div class="a" style="left:940px;top:217px;width:30.5px;height:23px;background:#4a5c6b;"></div>
<div class="a t" style="left:937px;width:36.5px;text-align:center;top:220.20px;font-size:7.5px;line-height:9.00px;color:#e4e8eb;">Offset</div>
<div class="a t" style="left:937px;width:36.5px;text-align:center;top:228.80px;font-size:7.5px;line-height:9.00px;color:#e4e8eb;">Embed</div>
<div class="a t" style="left:907px;width:65px;text-align:center;top:243.50px;font-size:7.5px;line-height:9.00px;color:#e4e8eb;">System</div>
<div class="a" style="left:908px;top:255px;width:30.299999999999955px;height:23px;background:#4a5c6b;"></div>
<div class="a t" style="left:905px;width:36.299999999999955px;text-align:center;top:262.50px;font-size:7.5px;line-height:9.00px;color:#e4e8eb;">File</div>
<div class="a" style="left:940px;top:255px;width:30.5px;height:23px;background:#4a5c6b;"></div>
<div class="a t" style="left:937px;width:36.5px;text-align:center;top:262.50px;font-size:7.5px;line-height:9.00px;color:#e4e8eb;">Print</div>
<div class="a" style="left:908px;top:280px;width:30.299999999999955px;height:23.5px;background:#4a5c6b;"></div>
<div class="a t" style="left:905px;width:36.299999999999955px;text-align:center;top:287.75px;font-size:7.5px;line-height:9.00px;color:#e4e8eb;">Display</div>
<div class="a" style="left:940px;top:280px;width:30.5px;height:23.5px;background:#4a5c6b;"></div>
<div class="a t" style="left:937px;width:36.5px;text-align:center;top:287.75px;font-size:7.5px;line-height:9.00px;color:#e4e8eb;">Setup</div>
<div class="a" style="left:908px;top:305.5px;width:30.299999999999955px;height:23.30000000000001px;background:#4a5c6b;"></div>
<div class="a t" style="left:905px;width:36.299999999999955px;text-align:center;top:313.15px;font-size:7.5px;line-height:9.00px;color:#e4e8eb;">Applic</div>
<div class="a" style="left:940px;top:305.5px;width:30.5px;height:23.30000000000001px;background:#3a8a78;"></div>
<div class="a t" style="left:937px;width:36.5px;text-align:center;top:313.15px;font-size:7.5px;line-height:9.00px;color:#e4e8eb;">Preset</div>
<div class="a" style="left:777px;top:561px;width:195px;height:15px;background:#1c232b;"></div>
<div class="a t" style="left:751px;top:565.18px;font-size:7.2px;line-height:8.64px;color:#dde1e4;">Ch1:&nbsp; Avg None</div>
<div class="a t" style="left:815px;top:565.18px;font-size:7.2px;line-height:8.64px;color:#dde1e4;">Ch1 P4</div>
<div class="a" style="left:846px;top:564.5px;width:54.5px;height:8.5px;background:linear-gradient(90deg,#4b7fae 0%,#3a9a78 45%,#2ec02c 100%)"></div>
<div class="a t" style="left:847px;top:564.98px;font-size:7.2px;line-height:8.64px;color:#eef2f4;">100%</div>
<div class="a t" style="left:902.5px;top:565.18px;font-size:7.2px;line-height:8.64px;color:#dde1e4;">6/1/2022 6:48:43 PM</div>
<div class="a" style="left:972px;top:0px;width:52px;height:576px;background:#fff;"></div>
<div class="a" style="left:312px;top:77px;width:399px;height:418px;background:#4a5b6a;"></div>
<div class="a" style="left:314px;top:97px;width:395px;height:396px;background:#1c232b;"></div>
<svg class="a" style="left:316px;top:80px" width="15" height="15" viewBox="0 0 15 15"><g fill="#45b8ee"><path d="M7.5,0.3 L10.6,3.4 L7.5,6.5 L4.4,3.4 Z"/><path d="M7.5,8.5 L10.6,11.6 L7.5,14.7 L4.4,11.6 Z"/><path d="M3.4,4.4 L6.5,7.5 L3.4,10.6 L0.3,7.5 Z"/><path d="M11.6,4.4 L14.7,7.5 L11.6,10.6 L8.5,7.5 Z"/></g><g fill="#dff3fc"><path d="M7.5,2 L9,3.4 L7.5,4.8 L6,3.4 Z"/><path d="M7.5,10.2 L9,11.6 L7.5,13 L6,11.6 Z"/><path d="M3.4,6 L4.8,7.5 L3.4,9 L2,7.5 Z"/><path d="M11.6,6 L13,7.5 L11.6,9 L10.2,7.5 Z"/></g></svg>
<div class="a t" style="left:332.5px;top:83.56px;font-size:7.4px;line-height:8.88px;color:#e2e7ea;">Delta-L Settings</div>
<div class="a" style="left:609.5px;top:82.5px;width:10px;height:6px;border-radius:3px;background:#c9cfd4"></div>
<div class="a" style="left:614.5px;top:83px;width:5px;height:5px;border-radius:3px;background:#f4f6f7"></div>
<svg class="a" style="left:637.5px;top:81.5px" width="9" height="8" viewBox="0 0 9 8"><path d="M0.5,2 L2.5,2 L3.3,0.8 L5.7,0.8 L6.5,2 L8.5,2 L8.5,7.5 L0.5,7.5 Z" fill="#eef1f3"/><circle cx="4.5" cy="4.6" r="1.6" fill="#4a5b6a"/></svg>
<div class="a" style="left:664.5px;top:82px;width:7.5px;height:5px;border:1px solid #e8ecef;border-top-width:2px;box-sizing:content-box"></div>
<div class="a" style="left:683px;top:77px;width:27px;height:19.5px;background:#c8393b;"></div>
<svg class="a" style="left:692px;top:82px" width="10" height="10"><path d="M1,1 L9,9 M9,1 L1,9" stroke="#ffffff" stroke-width="2"/></svg>
<div class="a t" style="left:320.5px;top:103.86px;font-size:7.4px;line-height:8.88px;color:#e6eaed;">Method</div>
<div class="a" style="left:319px;top:111px;width:98px;height:87px;border:1px solid #68727a"></div>
<div class="a t" style="left:320.5px;top:205.16px;font-size:7.4px;line-height:8.88px;color:#e6eaed;">Measurements</div>
<div class="a" style="left:319px;top:212px;width:98px;height:87px;border:1px solid #68727a"></div>
<div class="a t" style="left:320.5px;top:305.56px;font-size:7.4px;line-height:8.88px;color:#e6eaed;">Port Order</div>
<div class="a" style="left:319px;top:313px;width:98px;height:87px;border:1px solid #68727a"></div>
<div class="a t" style="left:423.5px;top:103.86px;font-size:7.4px;line-height:8.88px;color:#e6eaed;">Frequencies</div>
<div class="a" style="left:422px;top:111px;width:80px;height:289px;border:1px solid #68727a"></div>
<div class="a t" style="left:508.5px;top:103.86px;font-size:7.4px;line-height:8.88px;color:#e6eaed;">Sweep Control</div>
<div class="a" style="left:507px;top:111px;width:195px;height:89px;border:1px solid #68727a"></div>
<div class="a t" style="left:508.5px;top:207.86px;font-size:7.4px;line-height:8.88px;color:#e6eaed;">Sweep Frequency</div>
<div class="a" style="left:507px;top:215px;width:195px;height:110px;border:1px solid #68727a"></div>
<div class="a t" style="left:515px;top:222.66px;font-size:7.4px;line-height:8.88px;color:#e6eaed;">Minimum</div>
<div class="a" style="left:513px;top:229px;width:183px;height:29px;border:1px solid #68727a"></div>
<div class="a t" style="left:515px;top:264.86px;font-size:7.4px;line-height:8.88px;color:#e6eaed;">Maximum</div>
<div class="a" style="left:513px;top:272px;width:183px;height:28px;border:1px solid #68727a"></div>
<div class="a t" style="left:508.5px;top:332.56px;font-size:7.4px;line-height:8.88px;color:#e6eaed;">Trace</div>
<div class="a" style="left:507px;top:339px;width:195px;height:61px;border:1px solid #68727a"></div>
<div class="a t" style="left:320.5px;top:407.16px;font-size:7.4px;line-height:8.88px;color:#e6eaed;">Output Settings</div>
<div class="a" style="left:319px;top:414.5px;width:383px;height:35.5px;border:1px solid #68727a"></div>
<div class="a" style="left:319px;top:460px;width:385px;height:1px;background:#68727a;"></div>
<div class="a" style="left:325.5px;top:121.5px;width:87.0px;height:14.0px;background:#4a5c6b;"></div>
<div class="a t" style="left:329px;top:125.56px;font-size:7.4px;line-height:8.88px;color:#e6eaed;">Method 3L</div>
<svg class="a" style="left:404px;top:126.5px" width="6" height="4"><polygon points="0.3,0.3 5.7,0.3 3,3.5" fill="#eef1f3"/></svg>
<div class="a" style="left:325.5px;top:170px;width:87.0px;height:23.5px;background:#2a343e;"></div>
<div class="a" style="left:328px;top:177.5px;width:7px;height:7px;border:1px solid #4a5662"></div>
<div class="a t" style="left:340px;top:178.86px;font-size:7.4px;line-height:8.88px;color:#56626d;">1L Diff. Mode</div>
<div class="a" style="left:325.5px;top:218px;width:87.0px;height:23.5px;background:#4a5c6b;"></div>
<div class="a" style="left:328.5px;top:225.3px;width:7px;height:7px;border-radius:50%;border:1px solid #c4ccd2"></div>
<div class="a t" style="left:340px;top:226.86px;font-size:7.4px;line-height:8.88px;color:#e6eaed;">Single Ended</div>
<div class="a" style="left:325.5px;top:245px;width:87.0px;height:23px;background:#4a5c6b;"></div>
<div class="a" style="left:328.5px;top:252.0px;width:7px;height:7px;border-radius:50%;border:1px solid #e8ecef;background:#4a5c6b"></div>
<div class="a" style="left:330.3px;top:253.8px;width:5.4px;height:5.4px;border-radius:50%;background:#fafbfc"></div>
<div class="a t" style="left:340px;top:253.56px;font-size:7.4px;line-height:8.88px;color:#e6eaed;">Balanced</div>
<div class="a" style="left:325.5px;top:319px;width:87.0px;height:23px;background:#4a5c6b;"></div>
<div class="a" style="left:328.5px;top:326.0px;width:7px;height:7px;border-radius:50%;border:1px solid #c4ccd2"></div>
<div class="a t" style="left:340px;top:327.56px;font-size:7.4px;line-height:8.88px;color:#e6eaed;">Sequential</div>
<div class="a" style="left:325.5px;top:346px;width:87.0px;height:23px;background:#4a5c6b;"></div>
<div class="a" style="left:328.5px;top:353.0px;width:7px;height:7px;border-radius:50%;border:1px solid #e8ecef;background:#4a5c6b"></div>
<div class="a" style="left:330.3px;top:354.8px;width:5.4px;height:5.4px;border-radius:50%;background:#fafbfc"></div>
<div class="a t" style="left:340px;top:354.56px;font-size:7.4px;line-height:8.88px;color:#e6eaed;">Odd / Even</div>
<div class="a" style="left:429px;top:117.5px;width:68.5px;height:22.5px;background:#4a5c6b;"></div>
<div class="a" style="left:431.5px;top:124px;width:7px;height:7px;border:1px solid #8d99a2"></div>
<div class="a t" style="left:443.5px;top:122.16px;font-size:7.4px;line-height:8.88px;color:#e6eaed;">Use Default</div>
<div class="a t" style="left:443.5px;top:130.66px;font-size:7.4px;line-height:8.88px;color:#e6eaed;">Frequencies</div>
<div class="a" style="left:429px;top:143.5px;width:68.5px;height:224.5px;background:#dde3e8;"></div>
<div class="a t" style="left:431.5px;top:150.16px;font-size:7.4px;line-height:8.88px;color:#12161a;-webkit-text-stroke:0.1px currentColor">4 GHz</div>
<div class="a t" style="left:431.5px;top:166.46px;font-size:7.4px;line-height:8.88px;color:#12161a;-webkit-text-stroke:0.1px currentColor">8 GHz</div>
<div class="a t" style="left:431.5px;top:182.66px;font-size:7.4px;line-height:8.88px;color:#12161a;-webkit-text-stroke:0.1px currentColor">12.89 GHz</div>
<div class="a t" style="left:431.5px;top:198.86px;font-size:7.4px;line-height:8.88px;color:#12161a;-webkit-text-stroke:0.1px currentColor">16 GHz</div>
<div class="a t" style="left:431.5px;top:215.16px;font-size:7.4px;line-height:8.88px;color:#12161a;-webkit-text-stroke:0.1px currentColor">28 GHz</div>
<div class="a" style="left:429px;top:372px;width:68.5px;height:23.5px;background:#4a5c6b;"></div>
<div class="a t" style="left:429px;width:68.5px;text-align:center;top:376.66px;font-size:7.4px;line-height:8.88px;color:#e6eaed;">Edit User</div>
<div class="a t" style="left:429px;width:68.5px;text-align:center;top:385.06px;font-size:7.4px;line-height:8.88px;color:#e6eaed;">Frequencies...</div>
<div class="a" style="left:514px;top:117.5px;width:68px;height:22.5px;background:#4a5c6b;"></div>
<div class="a" style="left:516.5px;top:124.69999999999999px;width:7px;height:7px;border-radius:50%;border:1px solid #e8ecef;background:#4a5c6b"></div>
<div class="a" style="left:518.3px;top:126.49999999999999px;width:5.4px;height:5.4px;border-radius:50%;background:#fafbfc"></div>
<div class="a t" style="left:527.5px;top:126.16px;font-size:7.4px;line-height:8.88px;color:#e6eaed;">Use Defaults</div>
<div class="a" style="left:592px;top:117.5px;width:68px;height:22.5px;background:#4a5c6b;"></div>
<div class="a" style="left:594.5px;top:124.69999999999999px;width:7px;height:7px;border-radius:50%;border:1px solid #c4ccd2"></div>
<div class="a t" style="left:605.5px;top:126.16px;font-size:7.4px;line-height:8.88px;color:#e6eaed;">Current Sweep</div>
<div class="a" style="left:514px;top:146px;width:183px;height:15px;background:#4a5c6b;"></div>
<div class="a t" style="left:514px;width:76.5px;text-align:center;top:150.66px;font-size:7.4px;line-height:8.88px;color:#e6eaed;">Step</div>
<div class="a t" style="left:591.5px;width:105.5px;text-align:center;top:150.66px;font-size:7.4px;line-height:8.88px;color:#e6eaed;">IF BW</div>
<div class="a" style="left:514px;top:161px;width:183px;height:17.30000000000001px;background:#dde3e8;"></div>
<div class="a" style="left:590.5px;top:146px;width:1.0px;height:32.30000000000001px;background:#8a98a3;"></div>
<div class="a t" style="left:515.8px;top:166.56px;font-size:7.4px;line-height:8.88px;color:#12161a;-webkit-text-stroke:0.1px currentColor">10 MHz</div>
<div class="a t" style="left:592.8px;top:166.56px;font-size:7.4px;line-height:8.88px;color:#12161a;-webkit-text-stroke:0.1px currentColor">1 kHz</div>
<div class="a" style="left:520px;top:235.5px;width:68.5px;height:16.5px;background:#dde3e8;"></div>
<div class="a t" style="left:522px;top:240.66px;font-size:7.4px;line-height:8.88px;color:#12161a;-webkit-text-stroke:0.1px currentColor">10 MHz</div>
<svg class="a" style="left:577.5px;top:239.5px" width="10" height="10"><rect x="1" y="1" width="2" height="2" fill="#9aa4ac"/><rect x="1" y="4" width="2" height="2" fill="#9aa4ac"/><rect x="1" y="7" width="2" height="2" fill="#9aa4ac"/><rect x="4" y="1" width="2" height="2" fill="#9aa4ac"/><rect x="4" y="4" width="2" height="2" fill="#9aa4ac"/><rect x="4" y="7" width="2" height="2" fill="#9aa4ac"/><rect x="7" y="1" width="2" height="2" fill="#9aa4ac"/><rect x="7" y="4" width="2" height="2" fill="#9aa4ac"/><rect x="7" y="7" width="2" height="2" fill="#9aa4ac"/></svg>
<div class="a" style="left:520px;top:282.5px;width:45px;height:16.0px;background:#dde3e8;"></div>
<div class="a t" style="left:522px;top:287.36px;font-size:7.4px;line-height:8.88px;color:#12161a;-webkit-text-stroke:0.1px currentColor">40 GHz</div>
<div class="a" style="left:565px;top:278px;width:132.5px;height:24px;background:#4a5c6b;"></div>
<div class="a t" style="left:566.4px;width:44.0px;text-align:center;top:282.36px;font-size:7.4px;line-height:8.88px;color:#e6eaed;">Set to</div>
<div class="a t" style="left:566.4px;width:44.0px;text-align:center;top:290.86px;font-size:7.4px;line-height:8.88px;color:#e6eaed;">20 GHz</div>
<div class="a t" style="left:611.7px;width:44.0px;text-align:center;top:282.36px;font-size:7.4px;line-height:8.88px;color:#e6eaed;">Set to</div>
<div class="a t" style="left:611.7px;width:44.0px;text-align:center;top:290.86px;font-size:7.4px;line-height:8.88px;color:#e6eaed;">40 GHz</div>
<div class="a t" style="left:656.6px;width:44.0px;text-align:center;top:282.36px;font-size:7.4px;line-height:8.88px;color:#e6eaed;">Set to</div>
<div class="a t" style="left:656.6px;width:44.0px;text-align:center;top:290.86px;font-size:7.4px;line-height:8.88px;color:#e6eaed;">Max Freq</div>
<div class="a" style="left:514px;top:348px;width:183.5px;height:22.5px;background:#4a5c6b;"></div>
<div class="a" style="left:516.5px;top:355px;width:7px;height:7px;border:1px solid #a9b3ba"></div>
<svg class="a" style="left:518.0px;top:356.5px" width="7" height="7"><polyline points="0.8,3.6 2.7,5.6 6.2,1.2" fill="none" stroke="#ffffff" stroke-width="1.4"/></svg>
<div class="a t" style="left:528px;top:356.36px;font-size:7.4px;line-height:8.88px;color:#e6eaed;">Use Recommended Trace Configuration</div>
<div class="a" style="left:514px;top:372.5px;width:183.5px;height:23.0px;background:#4a5c6b;"></div>
<div class="a" style="left:516.5px;top:380px;width:7px;height:7px;border:1px solid #a9b3ba"></div>
<svg class="a" style="left:518.0px;top:381.5px" width="7" height="7"><polyline points="0.8,3.6 2.7,5.6 6.2,1.2" fill="none" stroke="#ffffff" stroke-width="1.4"/></svg>
<div class="a t" style="left:528px;top:381.16px;font-size:7.4px;line-height:8.88px;color:#e6eaed;">Show TDR Impedances</div>
<div class="a t" style="left:325.5px;top:422.36px;font-size:7.4px;line-height:8.88px;color:#7d8892;">Output Directory</div>
<div class="a" style="left:325px;top:430px;width:213.5px;height:15.5px;background:#2b3640;"></div>
<div class="a t" style="left:327.5px;top:434.86px;font-size:7.4px;line-height:8.88px;color:#8e99a2;">C:\Users\Public\Documents\Rohde-Schwarz\VNA\DeltaL</div>
<div class="a" style="left:541.5px;top:421px;width:45.5px;height:23.69999999999999px;background:#4a5c6b;"></div>
<div class="a t" style="left:538px;width:52px;text-align:center;top:425.66px;font-size:7.4px;line-height:8.88px;color:#e6eaed;">Set</div>
<div class="a t" style="left:538px;width:52px;text-align:center;top:434.06px;font-size:7.4px;line-height:8.88px;color:#e6eaed;">Directory ...</div>
<div class="a" style="left:591.3px;top:421px;width:45.200000000000045px;height:23.69999999999999px;background:#4a5c6b;"></div>
<div class="a t" style="left:588px;width:52px;text-align:center;top:425.66px;font-size:7.4px;line-height:8.88px;color:#e6eaed;">Use Default</div>
<div class="a t" style="left:588px;width:52px;text-align:center;top:434.06px;font-size:7.4px;line-height:8.88px;color:#e6eaed;">Directory</div>
<div class="a" style="left:640px;top:421px;width:57.299999999999955px;height:23.69999999999999px;background:#4a5c6b;"></div>
<div class="a" style="left:643px;top:428.5px;width:7px;height:7px;border:1px solid #8d99a2"></div>
<div class="a t" style="left:655.5px;top:425.66px;font-size:7.4px;line-height:8.88px;color:#e6eaed;">Timestamp</div>
<div class="a t" style="left:655.5px;top:434.06px;font-size:7.4px;line-height:8.88px;color:#e6eaed;">Filenames</div>
<div class="a" style="left:561.2px;top:464px;width:45.59999999999991px;height:23.69999999999999px;background:#4a5c6b;"></div>
<svg class="a" style="left:571px;top:470px" width="12" height="11"><polyline points="1,5.5 4.5,9.5 11,1.5" fill="none" stroke="#62d03a" stroke-width="2.2"/></svg>
<div class="a t" style="left:587px;top:472.66px;font-size:7.4px;line-height:8.88px;color:#e6eaed;">OK</div>
<div class="a" style="left:609.6px;top:464px;width:45.5px;height:23.69999999999999px;background:#4a5c6b;"></div>
<svg class="a" style="left:615.5px;top:470.5px" width="11" height="11"><path d="M1.5,1.5 L9.5,9.5 M9.5,1.5 L1.5,9.5" stroke="#f0484b" stroke-width="2"/></svg>
<div class="a t" style="left:629.5px;top:472.66px;font-size:7.4px;line-height:8.88px;color:#e6eaed;">Cancel</div>
<div class="a" style="left:658.3px;top:464px;width:45.5px;height:23.69999999999999px;background:#4a5c6b;"></div>
<div class="a t" style="left:665px;top:468.5px;width:14px;height:14px;border-radius:50%;background:#f5c518;color:#1b1b1b;font-size:10px;line-height:14px;text-align:center;font-weight:bold">?</div>
<div class="a t" style="left:682px;top:472.66px;font-size:7.4px;line-height:8.88px;color:#e6eaed;">Help</div>
</body></html>
